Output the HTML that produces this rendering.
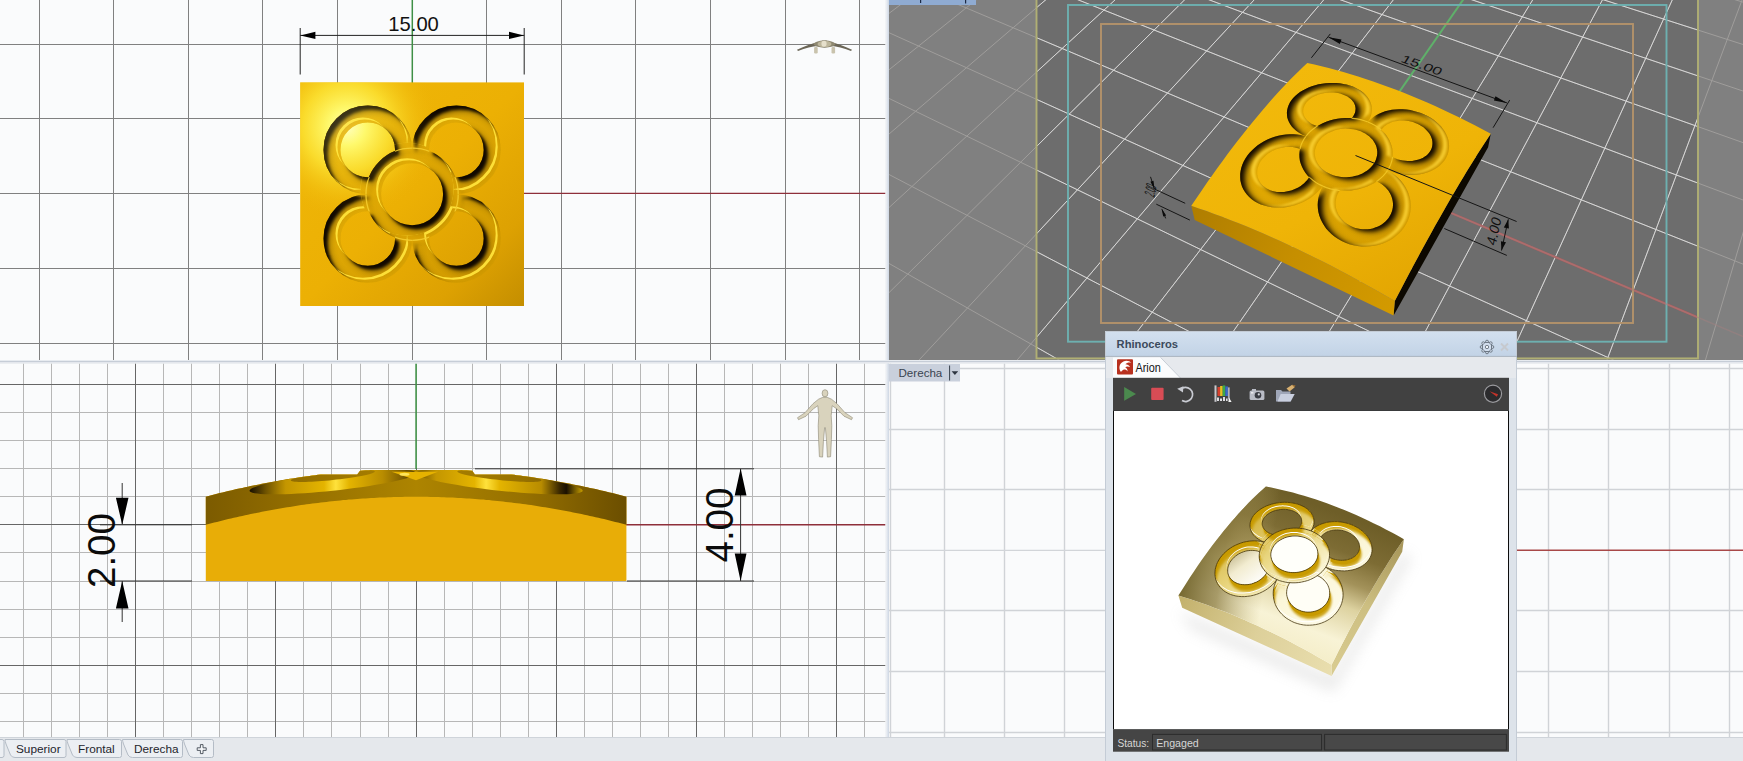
<!DOCTYPE html><html><head><meta charset="utf-8"><title>Rhinoceros</title>
<style>html,body{margin:0;padding:0;background:#e4e7eb;overflow:hidden}svg{display:block}text{font-family:"Liberation Sans",Arial,sans-serif}</style></head><body>
<svg width="1743" height="761" viewBox="0 0 1743 761">
<defs><clipPath id="c1"><rect x="0" y="0" width="885.5" height="360"/></clipPath>
<clipPath id="c2"><rect x="889" y="0" width="854" height="360"/></clipPath>
<clipPath id="c3"><rect x="0" y="363.5" width="885.5" height="373.5"/></clipPath>
<clipPath id="c4"><rect x="889" y="363.5" width="854" height="373.5"/></clipPath>
<radialGradient id="tvhl" gradientUnits="userSpaceOnUse" cx="347" cy="127" r="92"><stop offset="0" stop-color="#ffffc0"/><stop offset="0.2" stop-color="#fffb70" stop-opacity="0.97"/><stop offset="0.48" stop-color="#fde636" stop-opacity="0.78"/><stop offset="0.78" stop-color="#f5c816" stop-opacity="0.32"/><stop offset="1" stop-color="#eeb408" stop-opacity="0"/></radialGradient>
<linearGradient id="tvbase" gradientUnits="userSpaceOnUse" x1="300" y1="82" x2="524" y2="306"><stop offset="0" stop-color="#f0b808"/><stop offset="0.5" stop-color="#ecb004"/><stop offset="0.8" stop-color="#dda102"/><stop offset="1" stop-color="#c48e00"/></linearGradient>
<filter id="gv1" x="-5%" y="-5%" width="110%" height="110%" color-interpolation-filters="sRGB">
<feComponentTransfer in="SourceAlpha" result="inv"><feFuncA type="table" tableValues="1 0"/></feComponentTransfer>
<feGaussianBlur in="inv" stdDeviation="1.6" result="b1"/>
<feOffset in="b1" dx="3.7" dy="3.7" result="o1"/>
<feComposite in="o1" in2="SourceAlpha" operator="in" result="sh"/>
<feFlood flood-color="#100800" flood-opacity="1" result="dk"/>
<feComposite in="dk" in2="sh" operator="in" result="dark"/>
<feOffset in="inv" dx="-4.8100000000000005" dy="-4.8100000000000005" result="o2"/>
<feOffset in="inv" dx="-2.9600000000000004" dy="-2.9600000000000004" result="o3"/>
<feComposite in="o2" in2="o3" operator="out" result="band0"/>
<feGaussianBlur in="band0" stdDeviation="0.6" result="band1"/>
<feComposite in="band1" in2="SourceAlpha" operator="in" result="hl"/>
<feFlood flood-color="#ffe23a" flood-opacity="0.95" result="lt"/>
<feComposite in="lt" in2="hl" operator="in" result="light"/>
<feGaussianBlur in="inv" stdDeviation="3.04" result="b2"/>
<feOffset in="b2" dx="6.29" dy="6.29" result="o4"/>
<feComposite in="o4" in2="SourceAlpha" operator="in" result="sh2"/>
<feFlood flood-color="#100800" flood-opacity="0.4" result="dk2"/>
<feComposite in="dk2" in2="sh2" operator="in" result="dark2"/>
<feMerge><feMergeNode in="SourceGraphic"/><feMergeNode in="dark2"/><feMergeNode in="dark"/><feMergeNode in="light"/></feMerge></filter>
<mask id="m1u" maskUnits="userSpaceOnUse" x="280" y="60" width="270" height="270"><rect x="280" y="60" width="270" height="270" fill="#000"/><circle cx="367.8" cy="149.9" r="35.8" fill="none" stroke="#fff" stroke-width="17"/><circle cx="367.8" cy="238.5" r="35.8" fill="none" stroke="#fff" stroke-width="17"/><circle cx="456.4" cy="149.9" r="35.8" fill="none" stroke="#fff" stroke-width="17"/><circle cx="456.4" cy="238.5" r="35.8" fill="none" stroke="#fff" stroke-width="17"/><circle cx="412.1" cy="194.2" r="46.4" fill="#000"/><circle cx="412.1" cy="194.2" r="38.7" fill="none" stroke="#fff" stroke-width="15.4"/></mask>
<mask id="m1p" maskUnits="userSpaceOnUse" x="280" y="60" width="270" height="270"><rect x="280" y="60" width="270" height="270" fill="#000"/><circle cx="367.8" cy="149.9" r="35.8" fill="none" stroke="#fff" stroke-width="17"/><circle cx="367.8" cy="238.5" r="35.8" fill="none" stroke="#fff" stroke-width="17"/><circle cx="456.4" cy="149.9" r="35.8" fill="none" stroke="#fff" stroke-width="17"/><circle cx="456.4" cy="238.5" r="35.8" fill="none" stroke="#fff" stroke-width="17"/></mask>
<linearGradient id="tvgr" gradientUnits="userSpaceOnUse" x1="330" y1="110" x2="500" y2="280"><stop offset="0" stop-color="#e8b208"/><stop offset="1" stop-color="#cf9800"/></linearGradient>
<clipPath id="c2in"><rect x="1036.5" y="0" width="661.5" height="358.4"/></clipPath>
<linearGradient id="pvtop" gradientUnits="userSpaceOnUse" x1="1290" y1="70" x2="1400" y2="300"><stop offset="0" stop-color="#f2b90b"/><stop offset="0.55" stop-color="#efb407"/><stop offset="1" stop-color="#e3a602"/></linearGradient>
<linearGradient id="pvfl" gradientUnits="userSpaceOnUse" x1="1192" y1="215" x2="1394" y2="310"><stop offset="0" stop-color="#b07e00"/><stop offset="0.5" stop-color="#c68f00"/><stop offset="1" stop-color="#d39a00"/></linearGradient>
<mask id="m2u" maskUnits="userSpaceOnUse" x="1180" y="50" width="330" height="270"><rect x="1180" y="50" width="330" height="270" fill="#000"/><path d="M1323.9 184.5 L1325.7 181.4 L1327.2 178.3 L1328.4 175 L1329.2 171.8 L1329.7 168.6 L1329.8 165.4 L1329.6 162.3 L1329.1 159.2 L1328.2 156.2 L1327 153.4 L1325.5 150.6 L1323.7 148.1 L1321.6 145.7 L1319.3 143.5 L1316.7 141.5 L1313.9 139.8 L1310.9 138.2 L1307.6 136.9 L1304.3 135.9 L1300.8 135.1 L1297.2 134.6 L1293.5 134.3 L1289.7 134.3 L1286 134.5 L1282.2 135 L1278.4 135.8 L1274.7 136.8 L1271.1 138.1 L1267.5 139.5 L1264.1 141.3 L1260.8 143.2 L1257.7 145.3 L1254.8 147.7 L1252.1 150.2 L1249.6 152.8 L1247.4 155.6 L1245.4 158.5 L1243.7 161.5 L1242.4 164.6 L1241.3 167.7 L1240.6 170.9 L1240.2 174.1 L1240.2 177.3 L1240.4 180.4 L1241.1 183.5 L1242 186.4 L1243.3 189.3 L1245 192 L1246.9 194.6 L1249.2 197 L1251.7 199.2 L1254.5 201.2 L1257.6 202.9 L1260.8 204.4 L1264.3 205.6 L1268 206.5 L1271.8 207.2 L1275.7 207.6 L1279.7 207.6 L1283.7 207.4 L1287.7 206.9 L1291.8 206.1 L1295.7 204.9 L1299.6 203.6 L1303.4 201.9 L1307 200 L1310.4 197.9 L1313.6 195.6 L1316.6 193 L1319.3 190.3 L1321.7 187.5ZM1308.7 178.1 L1309.8 176.2 L1310.8 174.3 L1311.5 172.3 L1312.1 170.3 L1312.4 168.3 L1312.5 166.4 L1312.4 164.4 L1312.1 162.5 L1311.6 160.7 L1310.9 158.9 L1310 157.2 L1308.9 155.6 L1307.6 154.1 L1306.2 152.8 L1304.6 151.5 L1302.9 150.4 L1301 149.4 L1299 148.6 L1296.9 148 L1294.7 147.5 L1292.5 147.1 L1290.2 146.9 L1287.9 146.9 L1285.5 147.1 L1283.1 147.4 L1280.8 147.9 L1278.5 148.5 L1276.2 149.3 L1274 150.2 L1271.8 151.3 L1269.8 152.5 L1267.9 153.8 L1266.1 155.3 L1264.4 156.9 L1262.9 158.5 L1261.5 160.3 L1260.3 162.1 L1259.3 164 L1258.5 165.9 L1257.9 167.8 L1257.4 169.8 L1257.2 171.7 L1257.2 173.7 L1257.4 175.6 L1257.8 177.5 L1258.5 179.3 L1259.3 181.1 L1260.3 182.7 L1261.5 184.3 L1262.9 185.7 L1264.5 187.1 L1266.2 188.2 L1268.1 189.3 L1270.1 190.2 L1272.3 190.9 L1274.5 191.5 L1276.8 191.9 L1279.2 192.1 L1281.6 192.1 L1284.1 192 L1286.6 191.6 L1289 191.1 L1291.4 190.5 L1293.8 189.6 L1296.1 188.6 L1298.3 187.5 L1300.4 186.2 L1302.3 184.8 L1304.2 183.3 L1305.8 181.6 L1307.3 179.9Z" fill="#fff" fill-rule="evenodd"/><path d="M1367 123.2 L1368.6 120.8 L1369.9 118.4 L1370.9 115.9 L1371.5 113.4 L1371.9 110.9 L1371.9 108.4 L1371.6 106 L1370.9 103.6 L1370 101.2 L1368.8 99 L1367.2 96.8 L1365.4 94.7 L1363.4 92.8 L1361.1 91 L1358.5 89.4 L1355.8 87.9 L1352.9 86.6 L1349.8 85.5 L1346.6 84.6 L1343.3 83.9 L1339.8 83.3 L1336.3 83 L1332.8 82.9 L1329.2 82.9 L1325.6 83.2 L1322.1 83.7 L1318.6 84.3 L1315.2 85.2 L1311.8 86.2 L1308.6 87.5 L1305.6 88.9 L1302.7 90.4 L1300 92.1 L1297.5 94 L1295.2 96 L1293.2 98.1 L1291.4 100.3 L1289.9 102.6 L1288.7 105 L1287.8 107.4 L1287.2 109.9 L1286.9 112.4 L1287 114.9 L1287.3 117.4 L1288 119.8 L1289.1 122.2 L1290.4 124.5 L1292 126.7 L1294 128.8 L1296.2 130.7 L1298.7 132.5 L1301.5 134.2 L1304.5 135.7 L1307.6 136.9 L1311 138 L1314.6 138.9 L1318.2 139.5 L1322 139.9 L1325.8 140.1 L1329.6 140 L1333.4 139.7 L1337.3 139.2 L1341 138.4 L1344.6 137.5 L1348.2 136.3 L1351.5 134.9 L1354.7 133.3 L1357.6 131.6 L1360.4 129.7 L1362.9 127.6 L1365.1 125.5ZM1352.4 117.5 L1353.4 116.1 L1354.2 114.6 L1354.9 113.1 L1355.3 111.6 L1355.5 110 L1355.6 108.5 L1355.4 107 L1355.1 105.5 L1354.5 104 L1353.8 102.6 L1352.8 101.3 L1351.8 100 L1350.5 98.8 L1349.1 97.7 L1347.5 96.6 L1345.8 95.7 L1344 94.9 L1342.1 94.2 L1340.1 93.6 L1338 93.1 L1335.9 92.8 L1333.7 92.6 L1331.5 92.5 L1329.3 92.5 L1327 92.7 L1324.8 93 L1322.6 93.4 L1320.5 94 L1318.4 94.6 L1316.4 95.4 L1314.5 96.3 L1312.7 97.3 L1311.1 98.3 L1309.5 99.5 L1308.1 100.8 L1306.9 102.1 L1305.8 103.5 L1304.9 104.9 L1304.2 106.4 L1303.7 107.9 L1303.3 109.4 L1303.2 110.9 L1303.2 112.5 L1303.5 114 L1304 115.5 L1304.6 116.9 L1305.5 118.3 L1306.5 119.7 L1307.7 120.9 L1309.1 122.1 L1310.6 123.2 L1312.3 124.2 L1314.2 125.1 L1316.1 125.8 L1318.2 126.5 L1320.3 127 L1322.6 127.4 L1324.9 127.6 L1327.2 127.7 L1329.5 127.7 L1331.8 127.5 L1334.2 127.2 L1336.4 126.7 L1338.7 126.1 L1340.8 125.4 L1342.8 124.6 L1344.8 123.7 L1346.6 122.6 L1348.3 121.5 L1349.8 120.2 L1351.2 118.9Z" fill="#fff" fill-rule="evenodd"/><path d="M1405.9 224.6 L1407.6 221.3 L1408.9 217.9 L1409.9 214.4 L1410.5 210.9 L1410.8 207.3 L1410.7 203.7 L1410.3 200.2 L1409.5 196.7 L1408.4 193.3 L1407 189.9 L1405.2 186.7 L1403.2 183.7 L1400.9 180.8 L1398.3 178.1 L1395.4 175.6 L1392.4 173.3 L1389.1 171.2 L1385.7 169.5 L1382.1 167.9 L1378.4 166.7 L1374.6 165.7 L1370.8 165 L1366.8 164.6 L1362.9 164.5 L1359 164.7 L1355.1 165.1 L1351.3 165.9 L1347.5 167 L1343.9 168.3 L1340.4 169.9 L1337.1 171.8 L1334 173.9 L1331.1 176.2 L1328.4 178.8 L1326 181.5 L1323.9 184.5 L1322 187.6 L1320.5 190.9 L1319.3 194.2 L1318.4 197.7 L1317.9 201.2 L1317.7 204.8 L1317.9 208.4 L1318.4 212 L1319.3 215.5 L1320.6 219 L1322.2 222.3 L1324.1 225.6 L1326.3 228.7 L1328.9 231.6 L1331.7 234.3 L1334.8 236.8 L1338.2 239.1 L1341.7 241.1 L1345.5 242.8 L1349.4 244.2 L1353.4 245.2 L1357.5 246 L1361.7 246.5 L1365.8 246.6 L1370 246.3 L1374.1 245.8 L1378.2 244.9 L1382.1 243.7 L1385.9 242.2 L1389.5 240.4 L1392.9 238.4 L1396 236 L1398.9 233.5 L1401.6 230.7 L1403.9 227.7ZM1389.8 216 L1390.9 214 L1391.7 212 L1392.4 209.8 L1392.8 207.7 L1393 205.5 L1393 203.3 L1392.7 201.1 L1392.3 198.9 L1391.6 196.8 L1390.8 194.7 L1389.7 192.7 L1388.5 190.8 L1387 189 L1385.4 187.3 L1383.7 185.7 L1381.8 184.3 L1379.8 183 L1377.7 181.9 L1375.4 180.9 L1373.1 180.1 L1370.8 179.5 L1368.4 179.1 L1365.9 178.8 L1363.5 178.8 L1361 178.9 L1358.6 179.2 L1356.2 179.7 L1353.9 180.3 L1351.6 181.2 L1349.5 182.2 L1347.4 183.4 L1345.5 184.7 L1343.7 186.1 L1342 187.8 L1340.6 189.5 L1339.3 191.3 L1338.1 193.3 L1337.2 195.3 L1336.5 197.4 L1336 199.5 L1335.7 201.7 L1335.6 203.9 L1335.8 206.1 L1336.1 208.3 L1336.7 210.5 L1337.5 212.6 L1338.5 214.7 L1339.7 216.6 L1341.1 218.5 L1342.7 220.3 L1344.4 221.9 L1346.3 223.5 L1348.4 224.8 L1350.6 226 L1352.8 227 L1355.2 227.9 L1357.7 228.5 L1360.2 229 L1362.7 229.3 L1365.3 229.3 L1367.8 229.2 L1370.3 228.9 L1372.8 228.4 L1375.2 227.6 L1377.5 226.7 L1379.7 225.7 L1381.8 224.4 L1383.7 223 L1385.5 221.4 L1387.1 219.8 L1388.6 217.9Z" fill="#fff" fill-rule="evenodd"/><path d="M1445.2 159.4 L1446.7 156.8 L1447.8 154.2 L1448.5 151.5 L1449 148.7 L1449.1 145.8 L1448.9 143 L1448.4 140.1 L1447.5 137.3 L1446.3 134.5 L1444.9 131.8 L1443.1 129.2 L1441.1 126.6 L1438.8 124.2 L1436.3 121.9 L1433.6 119.8 L1430.6 117.8 L1427.5 116 L1424.3 114.5 L1420.9 113.1 L1417.4 111.9 L1413.8 110.9 L1410.2 110.1 L1406.5 109.6 L1402.8 109.3 L1399.2 109.3 L1395.5 109.4 L1392 109.8 L1388.5 110.5 L1385.2 111.3 L1382 112.4 L1379 113.7 L1376.1 115.3 L1373.5 117 L1371 118.9 L1368.9 121 L1367 123.2 L1365.3 125.6 L1364 128.1 L1363 130.7 L1362.3 133.5 L1361.9 136.3 L1361.9 139.1 L1362.2 142 L1362.8 144.9 L1363.7 147.8 L1365 150.6 L1366.6 153.4 L1368.6 156.1 L1370.8 158.7 L1373.3 161.2 L1376.1 163.5 L1379.1 165.7 L1382.3 167.7 L1385.7 169.5 L1389.3 171 L1393 172.3 L1396.8 173.4 L1400.7 174.2 L1404.7 174.8 L1408.6 175.1 L1412.5 175.1 L1416.4 174.8 L1420.1 174.3 L1423.8 173.6 L1427.2 172.5 L1430.5 171.3 L1433.6 169.8 L1436.5 168.1 L1439.1 166.2 L1441.4 164.1 L1443.5 161.8ZM1430 151.6 L1430.9 150 L1431.6 148.4 L1432.1 146.8 L1432.4 145 L1432.5 143.3 L1432.4 141.5 L1432.1 139.8 L1431.6 138 L1430.9 136.3 L1430 134.6 L1429 133 L1427.7 131.4 L1426.3 129.9 L1424.8 128.4 L1423.1 127.1 L1421.3 125.9 L1419.3 124.8 L1417.3 123.8 L1415.2 122.9 L1413 122.1 L1410.8 121.5 L1408.5 121 L1406.2 120.7 L1403.9 120.5 L1401.6 120.5 L1399.4 120.6 L1397.2 120.9 L1395 121.3 L1392.9 121.8 L1391 122.5 L1389.1 123.4 L1387.3 124.3 L1385.7 125.4 L1384.2 126.6 L1382.9 127.9 L1381.7 129.3 L1380.7 130.8 L1379.9 132.3 L1379.3 134 L1378.9 135.7 L1378.7 137.4 L1378.7 139.2 L1379 140.9 L1379.4 142.7 L1380 144.5 L1380.8 146.2 L1381.8 147.9 L1383 149.6 L1384.4 151.1 L1385.9 152.6 L1387.6 154.1 L1389.5 155.4 L1391.5 156.6 L1393.5 157.6 L1395.7 158.6 L1398 159.4 L1400.3 160 L1402.7 160.5 L1405.1 160.8 L1407.5 161 L1409.9 161 L1412.2 160.9 L1414.5 160.6 L1416.7 160.1 L1418.9 159.5 L1420.9 158.8 L1422.8 157.9 L1424.5 156.8 L1426.2 155.7 L1427.6 154.4 L1428.9 153.1Z" fill="#fff" fill-rule="evenodd"/><path d="M1387.6 170.4 L1389.3 167.4 L1390.7 164.4 L1391.7 161.3 L1392.4 158.1 L1392.7 154.9 L1392.7 151.8 L1392.3 148.6 L1391.5 145.5 L1390.4 142.5 L1389 139.6 L1387.3 136.8 L1385.3 134.1 L1383 131.6 L1380.4 129.3 L1377.6 127.1 L1374.6 125.2 L1371.3 123.5 L1367.9 122 L1364.4 120.7 L1360.7 119.6 L1356.9 118.8 L1353 118.3 L1349.1 118 L1345.2 118 L1341.3 118.2 L1337.4 118.7 L1333.5 119.5 L1329.8 120.5 L1326.2 121.7 L1322.7 123.2 L1319.3 124.9 L1316.2 126.8 L1313.2 128.9 L1310.5 131.2 L1308.1 133.7 L1305.9 136.3 L1304 139.1 L1302.4 142 L1301.1 145 L1300.2 148 L1299.6 151.2 L1299.4 154.3 L1299.5 157.5 L1299.9 160.7 L1300.8 163.8 L1302 166.8 L1303.5 169.8 L1305.4 172.7 L1307.5 175.4 L1310.1 177.9 L1312.9 180.3 L1315.9 182.5 L1319.2 184.4 L1322.8 186.1 L1326.5 187.6 L1330.4 188.8 L1334.5 189.7 L1338.6 190.3 L1342.8 190.6 L1347 190.6 L1351.2 190.4 L1355.4 189.8 L1359.5 189 L1363.4 187.8 L1367.3 186.4 L1370.9 184.8 L1374.4 182.9 L1377.6 180.7 L1380.5 178.4 L1383.2 175.9 L1385.6 173.2Z" fill="#000"/><path d="M1387.6 170.4 L1389.3 167.4 L1390.7 164.4 L1391.7 161.3 L1392.4 158.1 L1392.7 154.9 L1392.7 151.8 L1392.3 148.6 L1391.5 145.5 L1390.4 142.5 L1389 139.6 L1387.3 136.8 L1385.3 134.1 L1383 131.6 L1380.4 129.3 L1377.6 127.1 L1374.6 125.2 L1371.3 123.5 L1367.9 122 L1364.4 120.7 L1360.7 119.6 L1356.9 118.8 L1353 118.3 L1349.1 118 L1345.2 118 L1341.3 118.2 L1337.4 118.7 L1333.5 119.5 L1329.8 120.5 L1326.2 121.7 L1322.7 123.2 L1319.3 124.9 L1316.2 126.8 L1313.2 128.9 L1310.5 131.2 L1308.1 133.7 L1305.9 136.3 L1304 139.1 L1302.4 142 L1301.1 145 L1300.2 148 L1299.6 151.2 L1299.4 154.3 L1299.5 157.5 L1299.9 160.7 L1300.8 163.8 L1302 166.8 L1303.5 169.8 L1305.4 172.7 L1307.5 175.4 L1310.1 177.9 L1312.9 180.3 L1315.9 182.5 L1319.2 184.4 L1322.8 186.1 L1326.5 187.6 L1330.4 188.8 L1334.5 189.7 L1338.6 190.3 L1342.8 190.6 L1347 190.6 L1351.2 190.4 L1355.4 189.8 L1359.5 189 L1363.4 187.8 L1367.3 186.4 L1370.9 184.8 L1374.4 182.9 L1377.6 180.7 L1380.5 178.4 L1383.2 175.9 L1385.6 173.2ZM1373.7 163.9 L1374.9 161.9 L1375.8 159.9 L1376.5 157.8 L1377 155.7 L1377.3 153.6 L1377.3 151.5 L1377 149.4 L1376.6 147.3 L1375.9 145.3 L1374.9 143.3 L1373.8 141.4 L1372.5 139.6 L1370.9 137.9 L1369.2 136.3 L1367.3 134.9 L1365.3 133.6 L1363.1 132.4 L1360.8 131.3 L1358.4 130.5 L1355.9 129.8 L1353.4 129.2 L1350.8 128.9 L1348.1 128.7 L1345.5 128.6 L1342.8 128.8 L1340.2 129.1 L1337.6 129.6 L1335 130.3 L1332.6 131.2 L1330.2 132.2 L1328 133.3 L1325.9 134.6 L1323.9 136.1 L1322.1 137.6 L1320.5 139.3 L1319 141.1 L1317.8 143 L1316.7 144.9 L1315.9 146.9 L1315.3 149 L1314.9 151.1 L1314.8 153.2 L1314.9 155.3 L1315.3 157.4 L1315.8 159.5 L1316.7 161.5 L1317.7 163.5 L1319 165.4 L1320.5 167.2 L1322.1 168.9 L1324 170.4 L1326.1 171.9 L1328.3 173.1 L1330.6 174.3 L1333.1 175.2 L1335.7 176 L1338.4 176.6 L1341.1 177 L1343.9 177.2 L1346.7 177.2 L1349.5 177 L1352.2 176.7 L1354.9 176.1 L1357.6 175.4 L1360.1 174.4 L1362.5 173.4 L1364.8 172.1 L1367 170.7 L1368.9 169.2 L1370.7 167.5 L1372.3 165.7Z" fill="#fff" fill-rule="evenodd"/></mask>
<mask id="m2p" maskUnits="userSpaceOnUse" x="1180" y="50" width="330" height="270"><rect x="1180" y="50" width="330" height="270" fill="#000"/><path d="M1323.9 184.5 L1325.7 181.4 L1327.2 178.3 L1328.4 175 L1329.2 171.8 L1329.7 168.6 L1329.8 165.4 L1329.6 162.3 L1329.1 159.2 L1328.2 156.2 L1327 153.4 L1325.5 150.6 L1323.7 148.1 L1321.6 145.7 L1319.3 143.5 L1316.7 141.5 L1313.9 139.8 L1310.9 138.2 L1307.6 136.9 L1304.3 135.9 L1300.8 135.1 L1297.2 134.6 L1293.5 134.3 L1289.7 134.3 L1286 134.5 L1282.2 135 L1278.4 135.8 L1274.7 136.8 L1271.1 138.1 L1267.5 139.5 L1264.1 141.3 L1260.8 143.2 L1257.7 145.3 L1254.8 147.7 L1252.1 150.2 L1249.6 152.8 L1247.4 155.6 L1245.4 158.5 L1243.7 161.5 L1242.4 164.6 L1241.3 167.7 L1240.6 170.9 L1240.2 174.1 L1240.2 177.3 L1240.4 180.4 L1241.1 183.5 L1242 186.4 L1243.3 189.3 L1245 192 L1246.9 194.6 L1249.2 197 L1251.7 199.2 L1254.5 201.2 L1257.6 202.9 L1260.8 204.4 L1264.3 205.6 L1268 206.5 L1271.8 207.2 L1275.7 207.6 L1279.7 207.6 L1283.7 207.4 L1287.7 206.9 L1291.8 206.1 L1295.7 204.9 L1299.6 203.6 L1303.4 201.9 L1307 200 L1310.4 197.9 L1313.6 195.6 L1316.6 193 L1319.3 190.3 L1321.7 187.5ZM1308.7 178.1 L1309.8 176.2 L1310.8 174.3 L1311.5 172.3 L1312.1 170.3 L1312.4 168.3 L1312.5 166.4 L1312.4 164.4 L1312.1 162.5 L1311.6 160.7 L1310.9 158.9 L1310 157.2 L1308.9 155.6 L1307.6 154.1 L1306.2 152.8 L1304.6 151.5 L1302.9 150.4 L1301 149.4 L1299 148.6 L1296.9 148 L1294.7 147.5 L1292.5 147.1 L1290.2 146.9 L1287.9 146.9 L1285.5 147.1 L1283.1 147.4 L1280.8 147.9 L1278.5 148.5 L1276.2 149.3 L1274 150.2 L1271.8 151.3 L1269.8 152.5 L1267.9 153.8 L1266.1 155.3 L1264.4 156.9 L1262.9 158.5 L1261.5 160.3 L1260.3 162.1 L1259.3 164 L1258.5 165.9 L1257.9 167.8 L1257.4 169.8 L1257.2 171.7 L1257.2 173.7 L1257.4 175.6 L1257.8 177.5 L1258.5 179.3 L1259.3 181.1 L1260.3 182.7 L1261.5 184.3 L1262.9 185.7 L1264.5 187.1 L1266.2 188.2 L1268.1 189.3 L1270.1 190.2 L1272.3 190.9 L1274.5 191.5 L1276.8 191.9 L1279.2 192.1 L1281.6 192.1 L1284.1 192 L1286.6 191.6 L1289 191.1 L1291.4 190.5 L1293.8 189.6 L1296.1 188.6 L1298.3 187.5 L1300.4 186.2 L1302.3 184.8 L1304.2 183.3 L1305.8 181.6 L1307.3 179.9Z" fill="#fff" fill-rule="evenodd"/><path d="M1367 123.2 L1368.6 120.8 L1369.9 118.4 L1370.9 115.9 L1371.5 113.4 L1371.9 110.9 L1371.9 108.4 L1371.6 106 L1370.9 103.6 L1370 101.2 L1368.8 99 L1367.2 96.8 L1365.4 94.7 L1363.4 92.8 L1361.1 91 L1358.5 89.4 L1355.8 87.9 L1352.9 86.6 L1349.8 85.5 L1346.6 84.6 L1343.3 83.9 L1339.8 83.3 L1336.3 83 L1332.8 82.9 L1329.2 82.9 L1325.6 83.2 L1322.1 83.7 L1318.6 84.3 L1315.2 85.2 L1311.8 86.2 L1308.6 87.5 L1305.6 88.9 L1302.7 90.4 L1300 92.1 L1297.5 94 L1295.2 96 L1293.2 98.1 L1291.4 100.3 L1289.9 102.6 L1288.7 105 L1287.8 107.4 L1287.2 109.9 L1286.9 112.4 L1287 114.9 L1287.3 117.4 L1288 119.8 L1289.1 122.2 L1290.4 124.5 L1292 126.7 L1294 128.8 L1296.2 130.7 L1298.7 132.5 L1301.5 134.2 L1304.5 135.7 L1307.6 136.9 L1311 138 L1314.6 138.9 L1318.2 139.5 L1322 139.9 L1325.8 140.1 L1329.6 140 L1333.4 139.7 L1337.3 139.2 L1341 138.4 L1344.6 137.5 L1348.2 136.3 L1351.5 134.9 L1354.7 133.3 L1357.6 131.6 L1360.4 129.7 L1362.9 127.6 L1365.1 125.5ZM1352.4 117.5 L1353.4 116.1 L1354.2 114.6 L1354.9 113.1 L1355.3 111.6 L1355.5 110 L1355.6 108.5 L1355.4 107 L1355.1 105.5 L1354.5 104 L1353.8 102.6 L1352.8 101.3 L1351.8 100 L1350.5 98.8 L1349.1 97.7 L1347.5 96.6 L1345.8 95.7 L1344 94.9 L1342.1 94.2 L1340.1 93.6 L1338 93.1 L1335.9 92.8 L1333.7 92.6 L1331.5 92.5 L1329.3 92.5 L1327 92.7 L1324.8 93 L1322.6 93.4 L1320.5 94 L1318.4 94.6 L1316.4 95.4 L1314.5 96.3 L1312.7 97.3 L1311.1 98.3 L1309.5 99.5 L1308.1 100.8 L1306.9 102.1 L1305.8 103.5 L1304.9 104.9 L1304.2 106.4 L1303.7 107.9 L1303.3 109.4 L1303.2 110.9 L1303.2 112.5 L1303.5 114 L1304 115.5 L1304.6 116.9 L1305.5 118.3 L1306.5 119.7 L1307.7 120.9 L1309.1 122.1 L1310.6 123.2 L1312.3 124.2 L1314.2 125.1 L1316.1 125.8 L1318.2 126.5 L1320.3 127 L1322.6 127.4 L1324.9 127.6 L1327.2 127.7 L1329.5 127.7 L1331.8 127.5 L1334.2 127.2 L1336.4 126.7 L1338.7 126.1 L1340.8 125.4 L1342.8 124.6 L1344.8 123.7 L1346.6 122.6 L1348.3 121.5 L1349.8 120.2 L1351.2 118.9Z" fill="#fff" fill-rule="evenodd"/><path d="M1405.9 224.6 L1407.6 221.3 L1408.9 217.9 L1409.9 214.4 L1410.5 210.9 L1410.8 207.3 L1410.7 203.7 L1410.3 200.2 L1409.5 196.7 L1408.4 193.3 L1407 189.9 L1405.2 186.7 L1403.2 183.7 L1400.9 180.8 L1398.3 178.1 L1395.4 175.6 L1392.4 173.3 L1389.1 171.2 L1385.7 169.5 L1382.1 167.9 L1378.4 166.7 L1374.6 165.7 L1370.8 165 L1366.8 164.6 L1362.9 164.5 L1359 164.7 L1355.1 165.1 L1351.3 165.9 L1347.5 167 L1343.9 168.3 L1340.4 169.9 L1337.1 171.8 L1334 173.9 L1331.1 176.2 L1328.4 178.8 L1326 181.5 L1323.9 184.5 L1322 187.6 L1320.5 190.9 L1319.3 194.2 L1318.4 197.7 L1317.9 201.2 L1317.7 204.8 L1317.9 208.4 L1318.4 212 L1319.3 215.5 L1320.6 219 L1322.2 222.3 L1324.1 225.6 L1326.3 228.7 L1328.9 231.6 L1331.7 234.3 L1334.8 236.8 L1338.2 239.1 L1341.7 241.1 L1345.5 242.8 L1349.4 244.2 L1353.4 245.2 L1357.5 246 L1361.7 246.5 L1365.8 246.6 L1370 246.3 L1374.1 245.8 L1378.2 244.9 L1382.1 243.7 L1385.9 242.2 L1389.5 240.4 L1392.9 238.4 L1396 236 L1398.9 233.5 L1401.6 230.7 L1403.9 227.7ZM1389.8 216 L1390.9 214 L1391.7 212 L1392.4 209.8 L1392.8 207.7 L1393 205.5 L1393 203.3 L1392.7 201.1 L1392.3 198.9 L1391.6 196.8 L1390.8 194.7 L1389.7 192.7 L1388.5 190.8 L1387 189 L1385.4 187.3 L1383.7 185.7 L1381.8 184.3 L1379.8 183 L1377.7 181.9 L1375.4 180.9 L1373.1 180.1 L1370.8 179.5 L1368.4 179.1 L1365.9 178.8 L1363.5 178.8 L1361 178.9 L1358.6 179.2 L1356.2 179.7 L1353.9 180.3 L1351.6 181.2 L1349.5 182.2 L1347.4 183.4 L1345.5 184.7 L1343.7 186.1 L1342 187.8 L1340.6 189.5 L1339.3 191.3 L1338.1 193.3 L1337.2 195.3 L1336.5 197.4 L1336 199.5 L1335.7 201.7 L1335.6 203.9 L1335.8 206.1 L1336.1 208.3 L1336.7 210.5 L1337.5 212.6 L1338.5 214.7 L1339.7 216.6 L1341.1 218.5 L1342.7 220.3 L1344.4 221.9 L1346.3 223.5 L1348.4 224.8 L1350.6 226 L1352.8 227 L1355.2 227.9 L1357.7 228.5 L1360.2 229 L1362.7 229.3 L1365.3 229.3 L1367.8 229.2 L1370.3 228.9 L1372.8 228.4 L1375.2 227.6 L1377.5 226.7 L1379.7 225.7 L1381.8 224.4 L1383.7 223 L1385.5 221.4 L1387.1 219.8 L1388.6 217.9Z" fill="#fff" fill-rule="evenodd"/><path d="M1445.2 159.4 L1446.7 156.8 L1447.8 154.2 L1448.5 151.5 L1449 148.7 L1449.1 145.8 L1448.9 143 L1448.4 140.1 L1447.5 137.3 L1446.3 134.5 L1444.9 131.8 L1443.1 129.2 L1441.1 126.6 L1438.8 124.2 L1436.3 121.9 L1433.6 119.8 L1430.6 117.8 L1427.5 116 L1424.3 114.5 L1420.9 113.1 L1417.4 111.9 L1413.8 110.9 L1410.2 110.1 L1406.5 109.6 L1402.8 109.3 L1399.2 109.3 L1395.5 109.4 L1392 109.8 L1388.5 110.5 L1385.2 111.3 L1382 112.4 L1379 113.7 L1376.1 115.3 L1373.5 117 L1371 118.9 L1368.9 121 L1367 123.2 L1365.3 125.6 L1364 128.1 L1363 130.7 L1362.3 133.5 L1361.9 136.3 L1361.9 139.1 L1362.2 142 L1362.8 144.9 L1363.7 147.8 L1365 150.6 L1366.6 153.4 L1368.6 156.1 L1370.8 158.7 L1373.3 161.2 L1376.1 163.5 L1379.1 165.7 L1382.3 167.7 L1385.7 169.5 L1389.3 171 L1393 172.3 L1396.8 173.4 L1400.7 174.2 L1404.7 174.8 L1408.6 175.1 L1412.5 175.1 L1416.4 174.8 L1420.1 174.3 L1423.8 173.6 L1427.2 172.5 L1430.5 171.3 L1433.6 169.8 L1436.5 168.1 L1439.1 166.2 L1441.4 164.1 L1443.5 161.8ZM1430 151.6 L1430.9 150 L1431.6 148.4 L1432.1 146.8 L1432.4 145 L1432.5 143.3 L1432.4 141.5 L1432.1 139.8 L1431.6 138 L1430.9 136.3 L1430 134.6 L1429 133 L1427.7 131.4 L1426.3 129.9 L1424.8 128.4 L1423.1 127.1 L1421.3 125.9 L1419.3 124.8 L1417.3 123.8 L1415.2 122.9 L1413 122.1 L1410.8 121.5 L1408.5 121 L1406.2 120.7 L1403.9 120.5 L1401.6 120.5 L1399.4 120.6 L1397.2 120.9 L1395 121.3 L1392.9 121.8 L1391 122.5 L1389.1 123.4 L1387.3 124.3 L1385.7 125.4 L1384.2 126.6 L1382.9 127.9 L1381.7 129.3 L1380.7 130.8 L1379.9 132.3 L1379.3 134 L1378.9 135.7 L1378.7 137.4 L1378.7 139.2 L1379 140.9 L1379.4 142.7 L1380 144.5 L1380.8 146.2 L1381.8 147.9 L1383 149.6 L1384.4 151.1 L1385.9 152.6 L1387.6 154.1 L1389.5 155.4 L1391.5 156.6 L1393.5 157.6 L1395.7 158.6 L1398 159.4 L1400.3 160 L1402.7 160.5 L1405.1 160.8 L1407.5 161 L1409.9 161 L1412.2 160.9 L1414.5 160.6 L1416.7 160.1 L1418.9 159.5 L1420.9 158.8 L1422.8 157.9 L1424.5 156.8 L1426.2 155.7 L1427.6 154.4 L1428.9 153.1Z" fill="#fff" fill-rule="evenodd"/></mask>
<filter id="gv2" x="-5%" y="-5%" width="110%" height="110%" color-interpolation-filters="sRGB">
<feComponentTransfer in="SourceAlpha" result="inv"><feFuncA type="table" tableValues="1 0"/></feComponentTransfer>
<feGaussianBlur in="inv" stdDeviation="1.9" result="b1"/>
<feOffset in="b1" dx="4.2" dy="1.6" result="o1"/>
<feComposite in="o1" in2="SourceAlpha" operator="in" result="sh"/>
<feFlood flood-color="#140a00" flood-opacity="1" result="dk"/>
<feComposite in="dk" in2="sh" operator="in" result="dark"/>
<feOffset in="inv" dx="-6.300000000000001" dy="-2.4000000000000004" result="o2"/>
<feOffset in="inv" dx="-1.6800000000000002" dy="-0.6400000000000001" result="o3"/>
<feComposite in="o2" in2="o3" operator="out" result="band0"/>
<feGaussianBlur in="band0" stdDeviation="1.3" result="band1"/>
<feComposite in="band1" in2="SourceAlpha" operator="in" result="hl"/>
<feFlood flood-color="#ffd83a" flood-opacity="0.75" result="lt"/>
<feComposite in="lt" in2="hl" operator="in" result="light"/>
<feGaussianBlur in="inv" stdDeviation="3.61" result="b2"/>
<feOffset in="b2" dx="7.14" dy="2.72" result="o4"/>
<feComposite in="o4" in2="SourceAlpha" operator="in" result="sh2"/>
<feFlood flood-color="#140a00" flood-opacity="0.4" result="dk2"/>
<feComposite in="dk2" in2="sh2" operator="in" result="dark2"/>
<feMerge><feMergeNode in="SourceGraphic"/><feMergeNode in="dark2"/><feMergeNode in="dark"/><feMergeNode in="light"/></feMerge></filter>
<linearGradient id="pvgr" gradientUnits="userSpaceOnUse" x1="1230" y1="120" x2="1460" y2="220"><stop offset="0" stop-color="#e4ac04"/><stop offset="1" stop-color="#d29b00"/></linearGradient>
<linearGradient id="fvband" gradientUnits="userSpaceOnUse" x1="206" y1="0" x2="627" y2="0"><stop offset="0" stop-color="#7c5b00"/><stop offset="0.25" stop-color="#977100"/><stop offset="0.5" stop-color="#ad8400"/><stop offset="0.75" stop-color="#977100"/><stop offset="1" stop-color="#6b4e00"/></linearGradient>
<linearGradient id="fvpl" gradientUnits="userSpaceOnUse" x1="249" y1="0" x2="416" y2="0"><stop offset="0" stop-color="#140c00"/><stop offset="0.1" stop-color="#6e5200"/><stop offset="0.22" stop-color="#c49600"/><stop offset="0.45" stop-color="#e4b400"/><stop offset="0.52" stop-color="#ffe23c"/><stop offset="0.6" stop-color="#e4b400"/><stop offset="0.8" stop-color="#b88c00"/><stop offset="0.93" stop-color="#7a5a00"/><stop offset="1" stop-color="#2a1c00"/></linearGradient>
<linearGradient id="fvpr" gradientUnits="userSpaceOnUse" x1="416" y1="0" x2="583" y2="0"><stop offset="0" stop-color="#6e5200"/><stop offset="0.12" stop-color="#c49600"/><stop offset="0.35" stop-color="#e4b400"/><stop offset="0.42" stop-color="#ffe23c"/><stop offset="0.5" stop-color="#e4b400"/><stop offset="0.75" stop-color="#b88c00"/><stop offset="0.86" stop-color="#3a2800"/><stop offset="0.9" stop-color="#1a1000"/><stop offset="1" stop-color="#caa000"/></linearGradient>
<clipPath id="c3band"><path d="M205.8 496.8 L208.6 496 L211.4 495.3 L214.2 494.6 L217 493.8 L219.8 493.1 L222.6 492.5 L225.4 491.8 L228.2 491.1 L231 490.4 L233.8 489.8 L236.6 489.1 L239.4 488.5 L242.3 487.9 L245.1 487.3 L247.9 486.7 L250.7 486.1 L253.5 485.5 L256.3 484.9 L259.1 484.4 L261.9 483.8 L264.7 483.3 L267.5 482.7 L270.3 482.2 L273.1 481.7 L275.9 481.2 L278.7 480.7 L281.5 480.2 L284.3 479.7 L287.1 479.3 L289.9 478.8 L292.7 478.4 L295.5 477.9 L298.3 477.5 L301.1 477.1 L303.9 476.7 L306.7 476.3 L309.5 475.9 L312.4 475.5 L315.2 475.2 L318 474.8 L320.8 474.6 L323.6 474.6 L326.4 474.6 L329.2 474.6 L332 474.6 L334.8 474.6 L337.6 474.6 L340.4 474.6 L343.2 474.6 L346 474.6 L348.8 474.6 L351.6 474.6 L354.4 474.6 L357.2 474.6 L360 470.7 L362.8 470.5 L365.6 470.3 L368.4 470.2 L371.2 470 L374 470 L376.8 470 L379.6 470 L382.5 470 L385.3 470 L388.1 470 L390.9 470 L393.7 470 L396.5 470 L399.3 470 L402.1 470 L404.9 470 L407.7 470 L410.5 470 L413.3 470 L416.1 470 L418.9 470 L421.7 470 L424.5 470 L427.3 470 L430.1 470 L432.9 470 L435.7 470 L438.5 470 L441.3 470 L444.1 470 L446.9 470 L449.7 470 L452.6 470 L455.4 470 L458.2 470 L461 470 L463.8 470.2 L466.6 470.3 L469.4 470.5 L472.2 470.7 L475 474.6 L477.8 474.6 L480.6 474.6 L483.4 474.6 L486.2 474.6 L489 474.6 L491.8 474.6 L494.6 474.6 L497.4 474.6 L500.2 474.6 L503 474.6 L505.8 474.6 L508.6 474.6 L511.4 474.6 L514.2 474.8 L517 475.2 L519.8 475.5 L522.7 475.9 L525.5 476.3 L528.3 476.7 L531.1 477.1 L533.9 477.5 L536.7 477.9 L539.5 478.4 L542.3 478.8 L545.1 479.3 L547.9 479.7 L550.7 480.2 L553.5 480.7 L556.3 481.2 L559.1 481.7 L561.9 482.2 L564.7 482.7 L567.5 483.3 L570.3 483.8 L573.1 484.4 L575.9 484.9 L578.7 485.5 L581.5 486.1 L584.3 486.7 L587.1 487.3 L589.9 487.9 L592.8 488.5 L595.6 489.1 L598.4 489.8 L601.2 490.4 L604 491.1 L606.8 491.8 L609.6 492.5 L612.4 493.1 L615.2 493.8 L618 494.6 L620.8 495.3 L623.6 496 L626.4 496.8 L626.4 524.8 L623.6 524.1 L620.8 523.3 L618 522.6 L615.2 521.9 L612.4 521.2 L609.6 520.5 L606.8 519.8 L604 519.1 L601.2 518.5 L598.4 517.8 L595.6 517.2 L592.8 516.5 L589.9 515.9 L587.1 515.3 L584.3 514.7 L581.5 514.1 L578.7 513.5 L575.9 513 L573.1 512.4 L570.3 511.8 L567.5 511.3 L564.7 510.8 L561.9 510.2 L559.1 509.7 L556.3 509.2 L553.5 508.7 L550.7 508.2 L547.9 507.8 L545.1 507.3 L542.3 506.9 L539.5 506.4 L536.7 506 L533.9 505.6 L531.1 505.1 L528.3 504.7 L525.5 504.3 L522.7 504 L519.8 503.6 L517 503.2 L514.2 502.9 L511.4 502.5 L508.6 502.2 L505.8 501.9 L503 501.6 L500.2 501.2 L497.4 501 L494.6 500.7 L491.8 500.4 L489 500.1 L486.2 499.9 L483.4 499.6 L480.6 499.4 L477.8 499.2 L475 499 L472.2 498.8 L469.4 498.6 L466.6 498.4 L463.8 498.2 L461 498 L458.2 497.9 L455.4 497.7 L452.6 497.6 L449.7 497.5 L446.9 497.4 L444.1 497.3 L441.3 497.2 L438.5 497.1 L435.7 497 L432.9 496.9 L430.1 496.9 L427.3 496.8 L424.5 496.8 L421.7 496.8 L418.9 496.8 L416.1 496.8 L413.3 496.8 L410.5 496.8 L407.7 496.8 L404.9 496.8 L402.1 496.9 L399.3 496.9 L396.5 497 L393.7 497.1 L390.9 497.2 L388.1 497.3 L385.3 497.4 L382.5 497.5 L379.6 497.6 L376.8 497.7 L374 497.9 L371.2 498 L368.4 498.2 L365.6 498.4 L362.8 498.6 L360 498.8 L357.2 499 L354.4 499.2 L351.6 499.4 L348.8 499.6 L346 499.9 L343.2 500.1 L340.4 500.4 L337.6 500.7 L334.8 501 L332 501.2 L329.2 501.6 L326.4 501.9 L323.6 502.2 L320.8 502.5 L318 502.9 L315.2 503.2 L312.4 503.6 L309.5 504 L306.7 504.3 L303.9 504.7 L301.1 505.1 L298.3 505.6 L295.5 506 L292.7 506.4 L289.9 506.9 L287.1 507.3 L284.3 507.8 L281.5 508.2 L278.7 508.7 L275.9 509.2 L273.1 509.7 L270.3 510.2 L267.5 510.8 L264.7 511.3 L261.9 511.8 L259.1 512.4 L256.3 513 L253.5 513.5 L250.7 514.1 L247.9 514.7 L245.1 515.3 L242.3 515.9 L239.4 516.5 L236.6 517.2 L233.8 517.8 L231 518.5 L228.2 519.1 L225.4 519.8 L222.6 520.5 L219.8 521.2 L217 521.9 L214.2 522.6 L211.4 523.3 L208.6 524.1 L205.8 524.8Z"/></clipPath>
<linearGradient id="vdiv" x1="0" y1="0" x2="1" y2="0"><stop offset="0" stop-color="#f4f6f9"/><stop offset="1" stop-color="#cdd6e3"/></linearGradient>
<linearGradient id="ptitle" x1="0" y1="0" x2="0" y2="1"><stop offset="0" stop-color="#d3e0ef"/><stop offset="1" stop-color="#c2d3e6"/></linearGradient>
<clipPath id="c5"><rect x="1114" y="411" width="394" height="318.4"/></clipPath>
<filter id="blur6" x="-20%" y="-20%" width="140%" height="140%"><feGaussianBlur stdDeviation="7"/></filter>
<linearGradient id="rtopg" gradientUnits="userSpaceOnUse" x1="1335" y1="512" x2="1274.5" y2="670.8"><stop offset="0" stop-color="#6e5e28"/><stop offset="0.2" stop-color="#7d6c34"/><stop offset="0.36" stop-color="#a3925a"/><stop offset="0.5" stop-color="#ddd2a0"/><stop offset="0.7" stop-color="#f8f3d6"/><stop offset="1" stop-color="#f1e8bc"/></linearGradient>
<linearGradient id="rflg" gradientUnits="userSpaceOnUse" x1="1180" y1="600" x2="1332" y2="670"><stop offset="0" stop-color="#c3b16c"/><stop offset="0.5" stop-color="#ddd09a"/><stop offset="1" stop-color="#e9deae"/></linearGradient>
<linearGradient id="rrsg" gradientUnits="userSpaceOnUse" x1="1402" y1="545" x2="1334" y2="670"><stop offset="0" stop-color="#a8975a"/><stop offset="0.5" stop-color="#cdbf82"/><stop offset="1" stop-color="#d8cb90"/></linearGradient>
<clipPath id="c5top"><path d="M1178.4 595.6 L1182.3 589.4 L1186.1 583.4 L1189.9 577.5 L1193.8 571.7 L1197.6 566.1 L1201.4 560.6 L1205.2 555.3 L1209 550.1 L1212.7 545.1 L1216.4 540.2 L1220.2 535.4 L1223.9 530.8 L1227.5 526.4 L1231.2 522 L1234.8 517.9 L1238.4 513.8 L1241.9 509.9 L1245.4 506.2 L1248.9 502.6 L1252.4 499.1 L1255.8 495.8 L1259.2 492.6 L1262.6 489.5 L1265.9 486.6 L1271.2 487.6 L1276.6 488.7 L1282 489.9 L1287.4 491.2 L1292.9 492.6 L1298.5 494.2 L1304.1 495.8 L1309.7 497.5 L1315.4 499.3 L1321.2 501.3 L1326.9 503.3 L1332.7 505.5 L1338.5 507.7 L1344.4 510.1 L1350.3 512.5 L1356.2 515.1 L1362.1 517.7 L1368 520.5 L1374 523.4 L1380 526.3 L1385.9 529.4 L1391.9 532.6 L1397.9 535.8 L1403.9 539.2 L1401.4 542.7 L1398.9 546.4 L1396.3 550.2 L1393.7 554.1 L1391 558.2 L1388.3 562.5 L1385.5 566.9 L1382.7 571.4 L1379.8 576.1 L1376.9 581 L1373.9 586 L1370.9 591.2 L1367.8 596.5 L1364.7 601.9 L1361.6 607.5 L1358.4 613.3 L1355.2 619.2 L1351.9 625.3 L1348.6 631.5 L1345.3 637.9 L1341.9 644.4 L1338.5 651.1 L1335.1 657.9 L1331.6 664.8 L1324.7 660.8 L1317.9 656.9 L1311.1 653 L1304.3 649.3 L1297.5 645.7 L1290.7 642.1 L1284 638.6 L1277.4 635.3 L1270.7 632 L1264.1 628.9 L1257.6 625.8 L1251.1 622.9 L1244.7 620 L1238.3 617.3 L1232 614.6 L1225.8 612.1 L1219.6 609.7 L1213.5 607.4 L1207.4 605.1 L1201.5 603 L1195.6 601 L1189.8 599.1 L1184 597.3Z"/></clipPath>
<linearGradient id="rleft" gradientUnits="userSpaceOnUse" x1="1180" y1="590" x2="1262" y2="604"><stop offset="0" stop-color="#6f6128" stop-opacity="0.95"/><stop offset="0.45" stop-color="#85753a" stop-opacity="0.7"/><stop offset="1" stop-color="#b3a466" stop-opacity="0"/></linearGradient>
<mask id="m5out" maskUnits="userSpaceOnUse" x="1170" y="480" width="240" height="200"><rect x="1170" y="480" width="240" height="200" fill="#fff"/><path d="M1325.7 567.3 L1327 565 L1328 562.7 L1328.8 560.4 L1329.3 558 L1329.5 555.6 L1329.5 553.2 L1329.2 550.9 L1328.7 548.6 L1327.9 546.3 L1326.8 544.1 L1325.5 542 L1324 540 L1322.3 538.1 L1320.4 536.4 L1318.3 534.8 L1316 533.3 L1313.5 532 L1311 530.9 L1308.3 530 L1305.5 529.2 L1302.7 528.6 L1299.8 528.3 L1296.8 528.1 L1293.8 528.1 L1290.9 528.3 L1287.9 528.7 L1285 529.3 L1282.2 530 L1279.5 531 L1276.8 532.1 L1274.3 533.4 L1271.9 534.9 L1269.7 536.5 L1267.6 538.3 L1265.8 540.1 L1264.1 542.2 L1262.7 544.3 L1261.5 546.5 L1260.5 548.7 L1259.8 551.1 L1259.4 553.4 L1259.2 555.8 L1259.3 558.2 L1259.7 560.6 L1260.3 562.9 L1261.2 565.2 L1262.3 567.5 L1263.8 569.6 L1265.4 571.6 L1267.3 573.5 L1269.4 575.3 L1271.7 576.9 L1274.2 578.3 L1276.9 579.6 L1279.7 580.7 L1282.7 581.5 L1285.7 582.2 L1288.8 582.6 L1292 582.8 L1295.1 582.8 L1298.3 582.6 L1301.4 582.1 L1304.5 581.4 L1307.5 580.6 L1310.4 579.5 L1313.1 578.2 L1315.7 576.7 L1318.1 575.1 L1320.3 573.3 L1322.3 571.4 L1324.1 569.4Z" fill="#000"/></mask>
<linearGradient id="risl" gradientUnits="userSpaceOnUse" x1="1215" y1="540" x2="1290" y2="640"><stop offset="0" stop-color="#8a7a3e"/><stop offset="0.3" stop-color="#f2ecd0"/><stop offset="0.5" stop-color="#ffffff"/><stop offset="1" stop-color="#fffef4"/></linearGradient>
<mask id="m5u" maskUnits="userSpaceOnUse" x="1170" y="480" width="240" height="200"><rect x="1170" y="480" width="240" height="200" fill="#000"/><path d="M1277.7 578.3 L1279.1 576 L1280.2 573.6 L1281.1 571.1 L1281.7 568.7 L1282.1 566.2 L1282.2 563.8 L1282 561.4 L1281.6 559.1 L1280.9 556.9 L1280 554.7 L1278.9 552.7 L1277.6 550.8 L1276 549 L1274.2 547.4 L1272.3 545.9 L1270.1 544.6 L1267.9 543.5 L1265.5 542.6 L1262.9 541.9 L1260.3 541.3 L1257.6 541 L1254.8 540.8 L1252 540.9 L1249.2 541.1 L1246.3 541.6 L1243.5 542.2 L1240.7 543.1 L1238 544.1 L1235.3 545.3 L1232.7 546.6 L1230.3 548.2 L1227.9 549.8 L1225.8 551.7 L1223.7 553.6 L1221.9 555.7 L1220.2 557.8 L1218.8 560 L1217.5 562.4 L1216.5 564.7 L1215.8 567.1 L1215.2 569.5 L1215 571.9 L1214.9 574.3 L1215.2 576.7 L1215.6 579 L1216.4 581.2 L1217.4 583.4 L1218.6 585.4 L1220.1 587.3 L1221.8 589.1 L1223.7 590.7 L1225.8 592.1 L1228.1 593.4 L1230.6 594.5 L1233.2 595.3 L1235.9 596 L1238.8 596.4 L1241.7 596.6 L1244.7 596.6 L1247.7 596.3 L1250.7 595.9 L1253.7 595.2 L1256.7 594.3 L1259.6 593.2 L1262.4 591.8 L1265.1 590.4 L1267.6 588.7 L1270 586.9 L1272.3 584.9 L1274.3 582.8 L1276.1 580.6ZM1266.3 573.6 L1267.1 572.2 L1267.8 570.7 L1268.4 569.2 L1268.8 567.7 L1269 566.2 L1269.1 564.7 L1269 563.3 L1268.8 561.8 L1268.4 560.4 L1267.9 559.1 L1267.2 557.8 L1266.4 556.7 L1265.4 555.5 L1264.4 554.5 L1263.2 553.6 L1261.8 552.8 L1260.4 552.1 L1258.9 551.5 L1257.4 551 L1255.7 550.7 L1254.1 550.5 L1252.3 550.4 L1250.6 550.4 L1248.8 550.6 L1247 550.8 L1245.3 551.2 L1243.5 551.8 L1241.8 552.4 L1240.1 553.2 L1238.5 554 L1237 555 L1235.6 556 L1234.2 557.2 L1233 558.4 L1231.8 559.7 L1230.8 561 L1229.9 562.4 L1229.2 563.8 L1228.6 565.3 L1228.1 566.8 L1227.8 568.3 L1227.7 569.8 L1227.7 571.2 L1227.8 572.7 L1228.1 574.1 L1228.6 575.5 L1229.2 576.8 L1230 578 L1230.9 579.2 L1232 580.2 L1233.2 581.2 L1234.5 582.1 L1235.9 582.8 L1237.4 583.5 L1239 584 L1240.7 584.4 L1242.4 584.6 L1244.2 584.7 L1246 584.7 L1247.9 584.6 L1249.7 584.3 L1251.6 583.9 L1253.4 583.3 L1255.1 582.6 L1256.9 581.9 L1258.5 580.9 L1260.1 579.9 L1261.5 578.8 L1262.9 577.6 L1264.2 576.4 L1265.3 575Z" fill="#fff" fill-rule="evenodd"/><path d="M1310.3 531.9 L1311.5 530.1 L1312.5 528.3 L1313.2 526.5 L1313.8 524.6 L1314 522.7 L1314.1 520.9 L1313.8 519.1 L1313.4 517.3 L1312.7 515.6 L1311.8 513.9 L1310.7 512.3 L1309.3 510.8 L1307.8 509.4 L1306.1 508.1 L1304.2 506.9 L1302.1 505.9 L1299.9 504.9 L1297.6 504.1 L1295.2 503.5 L1292.7 503 L1290.1 502.6 L1287.5 502.4 L1284.8 502.3 L1282.1 502.4 L1279.4 502.6 L1276.7 503 L1274.1 503.5 L1271.5 504.2 L1269 505 L1266.5 505.9 L1264.2 507 L1262 508.2 L1260 509.5 L1258.1 510.9 L1256.3 512.4 L1254.8 514 L1253.4 515.6 L1252.3 517.4 L1251.4 519.1 L1250.7 521 L1250.2 522.8 L1250 524.6 L1250 526.5 L1250.3 528.3 L1250.8 530.1 L1251.5 531.9 L1252.5 533.6 L1253.7 535.2 L1255.2 536.7 L1256.9 538.1 L1258.8 539.4 L1260.8 540.6 L1263.1 541.7 L1265.5 542.6 L1268 543.4 L1270.7 544 L1273.4 544.4 L1276.2 544.6 L1279.1 544.7 L1282 544.6 L1284.9 544.4 L1287.8 544 L1290.6 543.4 L1293.3 542.6 L1296 541.7 L1298.5 540.7 L1300.9 539.5 L1303.2 538.1 L1305.2 536.7 L1307.1 535.2 L1308.8 533.6ZM1299.3 527.7 L1300 526.6 L1300.7 525.5 L1301.2 524.4 L1301.5 523.2 L1301.7 522.1 L1301.7 521 L1301.6 519.8 L1301.4 518.7 L1301 517.7 L1300.4 516.6 L1299.7 515.6 L1298.9 514.7 L1298 513.8 L1296.9 513 L1295.8 512.3 L1294.5 511.6 L1293.1 511 L1291.7 510.5 L1290.2 510.1 L1288.6 509.8 L1287 509.5 L1285.4 509.4 L1283.7 509.3 L1282 509.4 L1280.3 509.5 L1278.7 509.8 L1277 510.1 L1275.4 510.5 L1273.8 511 L1272.3 511.6 L1270.9 512.3 L1269.5 513 L1268.2 513.9 L1267.1 514.7 L1266 515.7 L1265.1 516.7 L1264.2 517.7 L1263.5 518.8 L1263 519.9 L1262.6 521 L1262.3 522.1 L1262.2 523.3 L1262.2 524.4 L1262.4 525.5 L1262.8 526.6 L1263.2 527.7 L1263.9 528.7 L1264.7 529.7 L1265.6 530.6 L1266.6 531.5 L1267.8 532.3 L1269 533 L1270.4 533.6 L1271.9 534.2 L1273.4 534.6 L1275.1 535 L1276.7 535.3 L1278.4 535.4 L1280.2 535.5 L1282 535.4 L1283.7 535.3 L1285.5 535 L1287.2 534.6 L1288.9 534.2 L1290.5 533.6 L1292 533 L1293.5 532.3 L1294.9 531.5 L1296.2 530.6 L1297.3 529.7 L1298.4 528.7Z" fill="#fff" fill-rule="evenodd"/><path d="M1339.4 608.4 L1340.7 605.9 L1341.7 603.3 L1342.4 600.7 L1342.9 598 L1343.1 595.3 L1343 592.6 L1342.7 589.9 L1342.1 587.2 L1341.3 584.6 L1340.2 582.1 L1338.9 579.7 L1337.4 577.3 L1335.6 575.1 L1333.7 573.1 L1331.6 571.2 L1329.3 569.5 L1326.8 567.9 L1324.2 566.6 L1321.6 565.4 L1318.8 564.5 L1315.9 563.7 L1313 563.2 L1310 562.9 L1307.1 562.9 L1304.1 563 L1301.2 563.4 L1298.3 564 L1295.5 564.8 L1292.7 565.9 L1290.1 567.1 L1287.6 568.5 L1285.3 570.2 L1283.1 572 L1281.1 573.9 L1279.3 576.1 L1277.7 578.3 L1276.3 580.7 L1275.2 583.2 L1274.3 585.8 L1273.7 588.4 L1273.3 591.1 L1273.2 593.8 L1273.4 596.6 L1273.8 599.3 L1274.5 602 L1275.4 604.6 L1276.6 607.2 L1278.1 609.6 L1279.8 612 L1281.8 614.2 L1283.9 616.2 L1286.2 618.1 L1288.8 619.7 L1291.4 621.2 L1294.2 622.5 L1297.2 623.5 L1300.2 624.3 L1303.3 624.9 L1306.4 625.2 L1309.5 625.2 L1312.6 625 L1315.7 624.6 L1318.8 623.9 L1321.7 623 L1324.5 621.8 L1327.2 620.5 L1329.7 618.9 L1332.1 617.1 L1334.3 615.1 L1336.2 613 L1337.9 610.8ZM1327.4 601.9 L1328.2 600.4 L1328.8 598.8 L1329.3 597.2 L1329.6 595.5 L1329.7 593.9 L1329.7 592.2 L1329.5 590.5 L1329.2 588.9 L1328.7 587.3 L1328.1 585.7 L1327.3 584.2 L1326.3 582.7 L1325.2 581.4 L1324 580.1 L1322.7 578.9 L1321.3 577.8 L1319.8 576.8 L1318.2 576 L1316.5 575.3 L1314.8 574.7 L1313 574.2 L1311.2 573.9 L1309.3 573.7 L1307.5 573.7 L1305.6 573.8 L1303.8 574 L1302 574.4 L1300.3 574.9 L1298.6 575.6 L1297 576.4 L1295.4 577.3 L1294 578.3 L1292.6 579.4 L1291.4 580.6 L1290.3 582 L1289.3 583.4 L1288.5 584.9 L1287.8 586.4 L1287.3 588 L1286.9 589.6 L1286.7 591.3 L1286.6 593 L1286.7 594.7 L1287 596.3 L1287.5 598 L1288.1 599.6 L1288.8 601.1 L1289.8 602.6 L1290.8 604.1 L1292 605.4 L1293.3 606.6 L1294.8 607.8 L1296.3 608.8 L1298 609.7 L1299.7 610.4 L1301.5 611.1 L1303.3 611.6 L1305.2 611.9 L1307.1 612.1 L1309 612.1 L1310.9 612 L1312.8 611.7 L1314.6 611.3 L1316.4 610.8 L1318.2 610.1 L1319.8 609.2 L1321.4 608.3 L1322.8 607.2 L1324.2 606 L1325.4 604.7 L1326.5 603.4Z" fill="#fff" fill-rule="evenodd"/><path d="M1369.1 559.3 L1370.2 557.4 L1371 555.4 L1371.6 553.4 L1372 551.3 L1372.1 549.2 L1371.9 547.1 L1371.6 544.9 L1370.9 542.8 L1370.1 540.7 L1369 538.7 L1367.7 536.7 L1366.2 534.8 L1364.5 533 L1362.6 531.3 L1360.6 529.7 L1358.4 528.2 L1356 526.8 L1353.6 525.6 L1351 524.5 L1348.4 523.6 L1345.7 522.9 L1343 522.3 L1340.2 521.9 L1337.4 521.6 L1334.7 521.6 L1331.9 521.7 L1329.3 522 L1326.6 522.4 L1324.1 523.1 L1321.7 523.9 L1319.4 524.8 L1317.2 525.9 L1315.2 527.2 L1313.4 528.6 L1311.7 530.2 L1310.3 531.9 L1309 533.6 L1308 535.5 L1307.2 537.5 L1306.7 539.5 L1306.4 541.6 L1306.3 543.8 L1306.5 545.9 L1307 548.1 L1307.7 550.3 L1308.7 552.4 L1309.9 554.5 L1311.3 556.6 L1313 558.5 L1314.9 560.4 L1317 562.1 L1319.2 563.8 L1321.7 565.2 L1324.2 566.6 L1326.9 567.7 L1329.7 568.7 L1332.6 569.6 L1335.5 570.2 L1338.5 570.6 L1341.5 570.8 L1344.4 570.9 L1347.3 570.7 L1350.1 570.3 L1352.9 569.8 L1355.5 569 L1358 568.1 L1360.3 567 L1362.5 565.7 L1364.5 564.3 L1366.2 562.8 L1367.8 561.1ZM1357.7 553.3 L1358.3 552.2 L1358.9 550.9 L1359.3 549.7 L1359.5 548.4 L1359.6 547.1 L1359.5 545.8 L1359.3 544.5 L1359 543.2 L1358.4 541.9 L1357.8 540.6 L1357 539.4 L1356.1 538.2 L1355 537.1 L1353.9 536 L1352.6 535 L1351.2 534 L1349.8 533.2 L1348.3 532.4 L1346.7 531.8 L1345 531.2 L1343.4 530.7 L1341.6 530.3 L1339.9 530.1 L1338.2 529.9 L1336.5 529.9 L1334.7 530 L1333.1 530.2 L1331.4 530.5 L1329.9 530.9 L1328.4 531.4 L1326.9 532 L1325.6 532.7 L1324.4 533.5 L1323.2 534.4 L1322.2 535.3 L1321.4 536.4 L1320.6 537.5 L1320 538.7 L1319.5 539.9 L1319.2 541.2 L1319.1 542.4 L1319.1 543.8 L1319.2 545.1 L1319.5 546.4 L1320 547.8 L1320.6 549.1 L1321.4 550.3 L1322.3 551.6 L1323.3 552.8 L1324.4 553.9 L1325.7 555 L1327.1 555.9 L1328.6 556.8 L1330.2 557.7 L1331.8 558.4 L1333.5 559 L1335.3 559.5 L1337.1 559.8 L1338.9 560.1 L1340.7 560.3 L1342.5 560.3 L1344.2 560.2 L1346 560 L1347.6 559.6 L1349.2 559.2 L1350.8 558.6 L1352.2 558 L1353.5 557.2 L1354.8 556.4 L1355.9 555.4 L1356.8 554.4Z" fill="#fff" fill-rule="evenodd"/><path d="M1325.7 567.3 L1327 565 L1328 562.7 L1328.8 560.4 L1329.3 558 L1329.5 555.6 L1329.5 553.2 L1329.2 550.9 L1328.7 548.6 L1327.9 546.3 L1326.8 544.1 L1325.5 542 L1324 540 L1322.3 538.1 L1320.4 536.4 L1318.3 534.8 L1316 533.3 L1313.5 532 L1311 530.9 L1308.3 530 L1305.5 529.2 L1302.7 528.6 L1299.8 528.3 L1296.8 528.1 L1293.8 528.1 L1290.9 528.3 L1287.9 528.7 L1285 529.3 L1282.2 530 L1279.5 531 L1276.8 532.1 L1274.3 533.4 L1271.9 534.9 L1269.7 536.5 L1267.6 538.3 L1265.8 540.1 L1264.1 542.2 L1262.7 544.3 L1261.5 546.5 L1260.5 548.7 L1259.8 551.1 L1259.4 553.4 L1259.2 555.8 L1259.3 558.2 L1259.7 560.6 L1260.3 562.9 L1261.2 565.2 L1262.3 567.5 L1263.8 569.6 L1265.4 571.6 L1267.3 573.5 L1269.4 575.3 L1271.7 576.9 L1274.2 578.3 L1276.9 579.6 L1279.7 580.7 L1282.7 581.5 L1285.7 582.2 L1288.8 582.6 L1292 582.8 L1295.1 582.8 L1298.3 582.6 L1301.4 582.1 L1304.5 581.4 L1307.5 580.6 L1310.4 579.5 L1313.1 578.2 L1315.7 576.7 L1318.1 575.1 L1320.3 573.3 L1322.3 571.4 L1324.1 569.4Z" fill="#000"/><path d="M1325.7 567.3 L1327 565 L1328 562.7 L1328.8 560.4 L1329.3 558 L1329.5 555.6 L1329.5 553.2 L1329.2 550.9 L1328.7 548.6 L1327.9 546.3 L1326.8 544.1 L1325.5 542 L1324 540 L1322.3 538.1 L1320.4 536.4 L1318.3 534.8 L1316 533.3 L1313.5 532 L1311 530.9 L1308.3 530 L1305.5 529.2 L1302.7 528.6 L1299.8 528.3 L1296.8 528.1 L1293.8 528.1 L1290.9 528.3 L1287.9 528.7 L1285 529.3 L1282.2 530 L1279.5 531 L1276.8 532.1 L1274.3 533.4 L1271.9 534.9 L1269.7 536.5 L1267.6 538.3 L1265.8 540.1 L1264.1 542.2 L1262.7 544.3 L1261.5 546.5 L1260.5 548.7 L1259.8 551.1 L1259.4 553.4 L1259.2 555.8 L1259.3 558.2 L1259.7 560.6 L1260.3 562.9 L1261.2 565.2 L1262.3 567.5 L1263.8 569.6 L1265.4 571.6 L1267.3 573.5 L1269.4 575.3 L1271.7 576.9 L1274.2 578.3 L1276.9 579.6 L1279.7 580.7 L1282.7 581.5 L1285.7 582.2 L1288.8 582.6 L1292 582.8 L1295.1 582.8 L1298.3 582.6 L1301.4 582.1 L1304.5 581.4 L1307.5 580.6 L1310.4 579.5 L1313.1 578.2 L1315.7 576.7 L1318.1 575.1 L1320.3 573.3 L1322.3 571.4 L1324.1 569.4ZM1315.2 562.4 L1316.1 560.9 L1316.8 559.4 L1317.4 557.8 L1317.7 556.2 L1317.9 554.6 L1317.9 553 L1317.7 551.4 L1317.4 549.9 L1316.9 548.4 L1316.2 546.9 L1315.3 545.5 L1314.3 544.1 L1313.2 542.9 L1311.9 541.7 L1310.5 540.6 L1308.9 539.6 L1307.3 538.7 L1305.6 537.9 L1303.8 537.3 L1301.9 536.8 L1300 536.4 L1298 536.1 L1296 536 L1294 536 L1292 536.1 L1290 536.4 L1288 536.8 L1286.1 537.3 L1284.3 538 L1282.5 538.8 L1280.8 539.7 L1279.2 540.7 L1277.7 541.7 L1276.3 542.9 L1275.1 544.2 L1274 545.6 L1273.1 547 L1272.3 548.5 L1271.7 550 L1271.2 551.6 L1270.9 553.2 L1270.8 554.8 L1270.9 556.4 L1271.2 557.9 L1271.6 559.5 L1272.2 561 L1273 562.5 L1274 563.9 L1275.1 565.2 L1276.4 566.5 L1277.8 567.7 L1279.3 568.7 L1281 569.7 L1282.8 570.5 L1284.6 571.2 L1286.6 571.8 L1288.6 572.2 L1290.7 572.5 L1292.8 572.6 L1294.9 572.6 L1296.9 572.4 L1299 572.1 L1301.1 571.7 L1303 571.1 L1305 570.4 L1306.8 569.6 L1308.5 568.6 L1310.1 567.6 L1311.6 566.4 L1313 565.1 L1314.2 563.8Z" fill="#fff" fill-rule="evenodd"/></mask>
<filter id="gv5" x="-5%" y="-5%" width="110%" height="110%" color-interpolation-filters="sRGB">
<feComponentTransfer in="SourceAlpha" result="inv"><feFuncA type="table" tableValues="1 0"/></feComponentTransfer>
<feGaussianBlur in="inv" stdDeviation="0.5" result="b1"/>
<feOffset in="b1" dx="1.0" dy="3.9" result="o1"/>
<feComposite in="o1" in2="SourceAlpha" operator="in" result="sh"/>
<feFlood flood-color="#c89a00" flood-opacity="1" result="dk"/>
<feComposite in="dk" in2="sh" operator="in" result="dark"/>
<feOffset in="inv" dx="-1.15" dy="-4.484999999999999" result="o2"/>
<feOffset in="inv" dx="-0.75" dy="-2.925" result="o3"/>
<feComposite in="o2" in2="o3" operator="out" result="band0"/>
<feGaussianBlur in="band0" stdDeviation="0.4" result="band1"/>
<feComposite in="band1" in2="SourceAlpha" operator="in" result="hl"/>
<feFlood flood-color="#ffffff" flood-opacity="1" result="lt"/>
<feComposite in="lt" in2="hl" operator="in" result="light"/>
<feGaussianBlur in="inv" stdDeviation="0.95" result="b2"/>
<feOffset in="b2" dx="1.7" dy="6.63" result="o4"/>
<feComposite in="o4" in2="SourceAlpha" operator="in" result="sh2"/>
<feFlood flood-color="#c89a00" flood-opacity="0.9" result="dk2"/>
<feComposite in="dk2" in2="sh2" operator="in" result="dark2"/>
<feMerge><feMergeNode in="SourceGraphic"/><feMergeNode in="dark2"/><feMergeNode in="dark"/><feMergeNode in="light"/></feMerge></filter>
<linearGradient id="rgr" gradientUnits="userSpaceOnUse" x1="1230" y1="510" x2="1330" y2="650"><stop offset="0" stop-color="#c9a21c"/><stop offset="0.35" stop-color="#e9d680"/><stop offset="0.6" stop-color="#fbf6d8"/><stop offset="1" stop-color="#fffdf0"/></linearGradient></defs>
<rect width="1743" height="761" fill="#e4e7eb"/>
<g clip-path="url(#c1)">
<rect x="0" y="0" width="886" height="360" fill="#fafbfc"/>
<path d="M-35.5 0V360 M39.5 0V360 M113.5 0V360 M188.5 0V360 M262.5 0V360 M337.5 0V360 M486.5 0V360 M561.5 0V360 M635.5 0V360 M710.5 0V360 M785.5 0V360 M859.5 0V360 M934.5 0V360 M0 44.5H886 M0 118.5H886 M0 268.5H886 M0 343.5H886 M0 193.5H300 M412.5 306V360" stroke="#808080" stroke-width="1" fill="none"/>
<path d="M412.3 0V83" stroke="#3f8f46" stroke-width="1.5"/>
<path d="M524 193.4H886" stroke="#8e2f3a" stroke-width="1.4"/>
<rect x="300.2" y="82.4" width="223.8" height="223.6" fill="url(#tvbase)"/>
<rect x="300.2" y="82.4" width="223.8" height="223.6" fill="url(#tvhl)"/>
<g filter="url(#gv1)"><rect x="280" y="60" width="270" height="270" fill="url(#tvgr)" mask="url(#m1u)"/></g>
<rect x="300.2" y="82.4" width="223.8" height="223.6" fill="url(#tvhl)" opacity="0.18" mask="url(#m1u)"/>
<g mask="url(#m1p)"><circle cx="412.1" cy="194.2" r="46.1" fill="none" stroke="#f6cf30" stroke-width="1.3" opacity="0.85"/></g>
<path d="M300.2 28V74.5M524.2 28V74.5M300.2 35.4H524.2" stroke="#222" stroke-width="1" fill="none"/>
<path d="M300.4 35.4l15-3.6v7.2zM524 35.4l-15-3.6v7.2z" fill="#000"/>
<text x="413.6" y="31.2" font-size="20.2" text-anchor="middle" fill="#111">15.00</text>
<g transform="translate(824.5,44.5)"><path d="M-27.5 5.2C-20 1.5-12 -1-6 -2.5C-3 -4.6 3 -4.6 6 -2.5C12 -1 20 1.5 27.5 5.2L26.5 6.4C19 3.6 12 2 7 1.6C3 3.4-3 3.4-7 1.6C-12 2-19 3.6-26.5 6.4Z" fill="#6b6657"/><ellipse cx="0" cy="-0.4" rx="11" ry="3.5" fill="#8d8770"/><ellipse cx="0" cy="-0.6" rx="7" ry="3.2" fill="#bdb69c"/><ellipse cx="-0.5" cy="-0.8" rx="2.6" ry="3" fill="#e6e0cc"/><rect x="-10.4" y="2.4" width="3.6" height="6.6" rx="1.2" fill="#c9c3ad"/><rect x="7" y="2.4" width="3.6" height="6.6" rx="1.2" fill="#c9c3ad"/></g>
</g>
<g clip-path="url(#c2)">
<rect x="889" y="0" width="854" height="360" fill="#808080"/>
<rect x="1036.5" y="-5" width="661.5" height="363.4" fill="#6d6d6d"/>
<path d="M1059.5 -417L-1146.3 590.2 M1084.7 -411.7L-1147.9 645.6 M1110.5 -406.4L-1149.7 705.3 M1136.8 -400.9L-1151.7 769.8 M1163.8 -395.2L-1153.8 840 M1191.5 -389.5L-1156.1 916.4 M1219.9 -383.6L-1158.6 1000 M1248.9 -377.5L-1161.4 1091.8 M1278.7 -371.3L-1164.5 1193 M1309.3 -365L-1167.8 1305.4 M1340.7 -358.4L-1171.6 1430.7 M1372.9 -351.7L-1175.9 1571.3 M1405.9 -344.9L-1180.7 1730.3 M1439.9 -337.8L-1186.1 1911.4 M1474.7 -330.5L-1192.4 2119.7 M1510.6 -323.1L-1199.7 2361.7 M1547.5 -315.4L-1208.3 2646.5 M1585.4 -307.5L-1218.6 2986.4 M1624.4 -299.4L-1231.1 3399 M1346.1 168.6L-1246.5 3910.6 M1705.9 -282.4L-1266.2 4561.7 M1748.5 -273.5L-1292 5418.2 M1792.5 -264.4L-1327.6 6595.7 M1837.8 -255L-1125 7637.7 M1884.5 -245.2L-447.2 7635 M1932.8 -235.2L230.6 7632.4 M1982.6 -224.8L908.4 7629.7 M2034.2 -214.1L1586.2 7627.1 M2087.4 -203L2264 7624.4 M2142.5 -191.5L2941.8 7621.8 M2199.6 -179.7L3619.6 7619.1 M2258.6 -167.4L4297.4 7616.4 M2319.9 -154.6L4975.2 7613.8 M2383.4 -141.4L5653 7611.1 M2449.3 -127.7L6330.8 7608.5 M2517.7 -113.4L7008.6 7605.8 M2588.9 -98.6L7686.4 7603.2 M2662.9 -83.2L8364.2 7600.5 M2739.9 -67.2L9042 7597.8 M2820.1 -50.5L9719.8 7595.2 M2903.8 -33.1L10397.6 7592.5 M2991.1 -14.9L11075.4 7589.9 M3082.3 4L11753.2 7587.2 M3177.6 23.9L12431 7584.5 M3277.4 44.7L13108.8 7581.9 M3382 66.4L13786.6 7579.2 M3491.6 89.3L14464.4 7576.6 M3606.8 113.2L15142.2 7573.9 M3727.9 138.4L15820 7571.3 M3855.4 165L16497.8 7568.6 M3989.8 192.9L17175.6 7565.9 M4131.7 222.5L17853.4 7563.3 M4281.7 253.7L18531.2 7560.6 M4440.6 286.8L19209 7558 M1059.5 -417L4609.1 321.8 M1037.4 -406.8L4761.3 393.9 M1014.2 -396.3L4932.9 475.1 M990 -385.2L5127.9 567.4 M964.6 -373.6L5351.4 673.3 M938.1 -361.5L5610.1 795.8 M910.2 -348.8L5913.2 939.3 M880.9 -335.4L6273.1 1109.7 M850.1 -321.3L6707.5 1315.3 M817.7 -306.5L7241.9 1568.4 M783.5 -290.9L7915.8 1887.4 M747.4 -274.4L8791.5 2302.1 M709.2 -257L9976.1 2862.9 M668.8 -238.5L11667.7 3663.8 M625.8 -218.9L14280.5 4900.9 M580.2 -198.1L18848.6 7063.7 M531.6 -175.9L1346.1 168.6 M479.7 -152.2L17560.6 7564.4 M424.2 -126.9L16299.3 7569.4 M364.7 -99.7L15038 7574.3 M300.7 -70.5L13776.7 7579.3 M231.8 -39L12515.4 7584.2 M157.2 -5L11254.1 7589.2 M76.4 32L9992.7 7594.1 M-11.6 72.1L8731.4 7599.1 M-107.6 116L7470.1 7604 M-213 164.1L6208.8 7608.9 M-329 217.1L4947.5 7613.9 M-457.5 275.7L3686.2 7618.8 M-600.5 341L2424.9 7623.8 M-760.6 414.1L1163.5 7628.7 M-941.1 496.6L-97.8 7633.7 M-1146.3 590.2L-1359.1 7638.6" stroke="#9f9d9b" stroke-width="1" fill="none"/>
<g clip-path="url(#c2in)"><path d="M1059.5 -417L-1146.3 590.2 M1084.7 -411.7L-1147.9 645.6 M1110.5 -406.4L-1149.7 705.3 M1136.8 -400.9L-1151.7 769.8 M1163.8 -395.2L-1153.8 840 M1191.5 -389.5L-1156.1 916.4 M1219.9 -383.6L-1158.6 1000 M1248.9 -377.5L-1161.4 1091.8 M1278.7 -371.3L-1164.5 1193 M1309.3 -365L-1167.8 1305.4 M1340.7 -358.4L-1171.6 1430.7 M1372.9 -351.7L-1175.9 1571.3 M1405.9 -344.9L-1180.7 1730.3 M1439.9 -337.8L-1186.1 1911.4 M1474.7 -330.5L-1192.4 2119.7 M1510.6 -323.1L-1199.7 2361.7 M1547.5 -315.4L-1208.3 2646.5 M1585.4 -307.5L-1218.6 2986.4 M1624.4 -299.4L-1231.1 3399 M1346.1 168.6L-1246.5 3910.6 M1705.9 -282.4L-1266.2 4561.7 M1748.5 -273.5L-1292 5418.2 M1792.5 -264.4L-1327.6 6595.7 M1837.8 -255L-1125 7637.7 M1884.5 -245.2L-447.2 7635 M1932.8 -235.2L230.6 7632.4 M1982.6 -224.8L908.4 7629.7 M2034.2 -214.1L1586.2 7627.1 M2087.4 -203L2264 7624.4 M2142.5 -191.5L2941.8 7621.8 M2199.6 -179.7L3619.6 7619.1 M2258.6 -167.4L4297.4 7616.4 M2319.9 -154.6L4975.2 7613.8 M2383.4 -141.4L5653 7611.1 M2449.3 -127.7L6330.8 7608.5 M2517.7 -113.4L7008.6 7605.8 M2588.9 -98.6L7686.4 7603.2 M2662.9 -83.2L8364.2 7600.5 M2739.9 -67.2L9042 7597.8 M2820.1 -50.5L9719.8 7595.2 M2903.8 -33.1L10397.6 7592.5 M2991.1 -14.9L11075.4 7589.9 M3082.3 4L11753.2 7587.2 M3177.6 23.9L12431 7584.5 M3277.4 44.7L13108.8 7581.9 M3382 66.4L13786.6 7579.2 M3491.6 89.3L14464.4 7576.6 M3606.8 113.2L15142.2 7573.9 M3727.9 138.4L15820 7571.3 M3855.4 165L16497.8 7568.6 M3989.8 192.9L17175.6 7565.9 M4131.7 222.5L17853.4 7563.3 M4281.7 253.7L18531.2 7560.6 M4440.6 286.8L19209 7558 M1059.5 -417L4609.1 321.8 M1037.4 -406.8L4761.3 393.9 M1014.2 -396.3L4932.9 475.1 M990 -385.2L5127.9 567.4 M964.6 -373.6L5351.4 673.3 M938.1 -361.5L5610.1 795.8 M910.2 -348.8L5913.2 939.3 M880.9 -335.4L6273.1 1109.7 M850.1 -321.3L6707.5 1315.3 M817.7 -306.5L7241.9 1568.4 M783.5 -290.9L7915.8 1887.4 M747.4 -274.4L8791.5 2302.1 M709.2 -257L9976.1 2862.9 M668.8 -238.5L11667.7 3663.8 M625.8 -218.9L14280.5 4900.9 M580.2 -198.1L18848.6 7063.7 M531.6 -175.9L1346.1 168.6 M479.7 -152.2L17560.6 7564.4 M424.2 -126.9L16299.3 7569.4 M364.7 -99.7L15038 7574.3 M300.7 -70.5L13776.7 7579.3 M231.8 -39L12515.4 7584.2 M157.2 -5L11254.1 7589.2 M76.4 32L9992.7 7594.1 M-11.6 72.1L8731.4 7599.1 M-107.6 116L7470.1 7604 M-213 164.1L6208.8 7608.9 M-329 217.1L4947.5 7613.9 M-457.5 275.7L3686.2 7618.8 M-600.5 341L2424.9 7623.8 M-760.6 414.1L1163.5 7628.7 M-941.1 496.6L-97.8 7633.7 M-1146.3 590.2L-1359.1 7638.6" stroke="#d9d9d9" stroke-width="0.95" fill="none"/>
<path d="M1346.1 168.6L1664.6 -291" stroke="#5fb06a" stroke-width="2"/>
<path d="M1346.1 168.6L12017.6 4681.8" stroke="#b65c5c" stroke-width="2.1"/>
</g>
<rect x="1036.5" y="-5" width="661.5" height="363.4" fill="none" stroke="#b0af74" stroke-width="1.9"/>
<rect x="1068" y="5" width="598.5" height="336.7" fill="none" stroke="#6db0b0" stroke-width="1.9"/>
<rect x="1101" y="24" width="532" height="299" fill="none" stroke="#b3926a" stroke-width="1.9"/>
<path d="M1346.1 168.6L12017.6 4681.8" stroke="#a08080" stroke-width="1.4" opacity="0.55"/>
<rect x="1036.5" y="0" width="661.5" height="358.4" fill="none"/>
<path d="M1394.8 301 L1399.5 291.9 L1404.2 283 L1408.8 274.3 L1413.3 265.7 L1417.8 257.4 L1422.2 249.2 L1426.6 241.2 L1430.9 233.4 L1435.1 225.8 L1439.3 218.4 L1443.4 211.2 L1447.5 204.1 L1451.4 197.3 L1455.4 190.6 L1459.2 184.1 L1463 177.8 L1466.7 171.6 L1470.3 165.7 L1473.9 159.9 L1477.4 154.3 L1480.8 148.9 L1484.2 143.7 L1487.5 138.7 L1490.8 133.8 L1488.1 147.3 L1393.6 315.6Z" fill="#0c0800"/>
<path d="M1191.3 205.8 L1198.9 208.4 L1206.6 211.1 L1214.3 213.9 L1222.2 216.8 L1230.1 219.9 L1238.1 223.1 L1246.3 226.3 L1254.5 229.8 L1262.8 233.3 L1271.1 237 L1279.6 240.8 L1288.1 244.7 L1296.7 248.7 L1305.3 252.9 L1314 257.2 L1322.8 261.6 L1331.7 266.1 L1340.5 270.7 L1349.5 275.5 L1358.5 280.4 L1367.5 285.4 L1376.6 290.5 L1385.7 295.7 L1394.8 301 L1393.6 315.6 L1194.7 219.9Z" fill="url(#pvfl)"/>
<path d="M1191.3 205.8 L1196.6 197.9 L1201.9 190.2 L1207.1 182.6 L1212.3 175.2 L1217.4 168 L1222.6 160.9 L1227.6 154 L1232.7 147.3 L1237.7 140.8 L1242.7 134.4 L1247.6 128.2 L1252.5 122.2 L1257.3 116.4 L1262.1 110.7 L1266.8 105.2 L1271.5 99.8 L1276.2 94.6 L1280.8 89.6 L1285.3 84.8 L1289.8 80.1 L1294.3 75.6 L1298.7 71.2 L1303 67 L1307.3 63 L1314.4 64.6 L1321.5 66.3 L1328.7 68.1 L1336 70 L1343.3 72.1 L1350.7 74.3 L1358.1 76.6 L1365.6 79 L1373.2 81.5 L1380.8 84.2 L1388.4 86.9 L1396.1 89.8 L1403.8 92.8 L1411.6 96 L1419.4 99.2 L1427.2 102.6 L1435.1 106.1 L1443 109.7 L1450.9 113.4 L1458.9 117.3 L1466.8 121.2 L1474.8 125.3 L1482.8 129.5 L1490.8 133.8 L1487.5 138.7 L1484.2 143.7 L1480.8 148.9 L1477.4 154.3 L1473.9 159.9 L1470.3 165.7 L1466.7 171.6 L1463 177.8 L1459.2 184.1 L1455.4 190.6 L1451.4 197.3 L1447.5 204.1 L1443.4 211.2 L1439.3 218.4 L1435.1 225.8 L1430.9 233.4 L1426.6 241.2 L1422.2 249.2 L1417.8 257.4 L1413.3 265.7 L1408.8 274.3 L1404.2 283 L1399.5 291.9 L1394.8 301 L1385.7 295.7 L1376.6 290.5 L1367.5 285.4 L1358.5 280.4 L1349.5 275.5 L1340.5 270.7 L1331.7 266.1 L1322.8 261.6 L1314 257.2 L1305.3 252.9 L1296.7 248.7 L1288.1 244.7 L1279.6 240.8 L1271.1 237 L1262.8 233.3 L1254.5 229.8 L1246.3 226.3 L1238.1 223.1 L1230.1 219.9 L1222.2 216.8 L1214.3 213.9 L1206.6 211.1 L1198.9 208.4Z" fill="url(#pvtop)"/>
<g filter="url(#gv2)"><rect x="1180" y="50" width="330" height="270" fill="url(#pvgr)" mask="url(#m2u)"/></g>
<g mask="url(#m2p)"><path d="M1387.6 170.4 L1389.3 167.4 L1390.7 164.4 L1391.7 161.3 L1392.4 158.1 L1392.7 154.9 L1392.7 151.8 L1392.3 148.6 L1391.5 145.5 L1390.4 142.5 L1389 139.6 L1387.3 136.8 L1385.3 134.1 L1383 131.6 L1380.4 129.3 L1377.6 127.1 L1374.6 125.2 L1371.3 123.5 L1367.9 122 L1364.4 120.7 L1360.7 119.6 L1356.9 118.8 L1353 118.3 L1349.1 118 L1345.2 118 L1341.3 118.2 L1337.4 118.7 L1333.5 119.5 L1329.8 120.5 L1326.2 121.7 L1322.7 123.2 L1319.3 124.9 L1316.2 126.8 L1313.2 128.9 L1310.5 131.2 L1308.1 133.7 L1305.9 136.3 L1304 139.1 L1302.4 142 L1301.1 145 L1300.2 148 L1299.6 151.2 L1299.4 154.3 L1299.5 157.5 L1299.9 160.7 L1300.8 163.8 L1302 166.8 L1303.5 169.8 L1305.4 172.7 L1307.5 175.4 L1310.1 177.9 L1312.9 180.3 L1315.9 182.5 L1319.2 184.4 L1322.8 186.1 L1326.5 187.6 L1330.4 188.8 L1334.5 189.7 L1338.6 190.3 L1342.8 190.6 L1347 190.6 L1351.2 190.4 L1355.4 189.8 L1359.5 189 L1363.4 187.8 L1367.3 186.4 L1370.9 184.8 L1374.4 182.9 L1377.6 180.7 L1380.5 178.4 L1383.2 175.9 L1385.6 173.2Z" fill="none" stroke="#f3c92a" stroke-width="1.2" opacity="0.8"/></g>
<path d="M1328.5 37.2L1506.9 102.9M1311.4 57.8L1330.3 33.9M1493.1 127.7L1509.7 100.1M1355.5 155.5L1516.6 221.5M1444.3 228.5L1506.8 255.4M1508.3 219.3L1501.5 250.5M1154.2 188.9L1185.2 203.3M1156.3 204.2L1189.9 220.1M1150.5 176.8L1154.2 188.4M1165.7 218.4L1162 209.4" stroke="#151515" stroke-width="1" fill="none"/>
<path d="M1328.5 37.2L1339.9 43.9L1341.5 39.5ZM1506.9 102.9L1495.5 96.2L1493.9 100.6ZM1508.3 219.3L1503.8 227.5L1508.9 228.6ZM1501.5 250.5L1506 242.3L1500.9 241.2ZM1154.4 188.9L1153.5 180.8L1150.4 181.8ZM1161.6 208.6L1163.2 216.6L1166.2 215.4Z" fill="#0a0a0a"/>
<text transform="matrix(0.9397 0.342 -0.357 0.59 1400 61.4)" font-size="16.8" fill="#111">15.00</text>
<text transform="matrix(0.213 -0.978 0.928 0.372 1495.6 246.4)" font-size="14.2" fill="#111">4.00</text>
<text transform="matrix(0.1 -0.5 1.25 0.58 1154.2 198)" font-size="11.5" fill="#111">2.00</text>
<rect x="889" y="0" width="87" height="5" fill="#8fabd2"/><path d="M920.6 0V3M965.6 0V3.5" stroke="#1c2a44" stroke-width="1.2"/>
</g>
<g clip-path="url(#c3)">
<rect x="0" y="363" width="886" height="375" fill="#fafbfc"/>
<path d="M-32.5 363V738 M23.5 363V738 M51.5 363V738 M79.5 363V738 M107.5 363V738 M163.5 363V738 M191.5 363V738 M219.5 363V738 M247.5 363V738 M303.5 363V738 M331.5 363V738 M360.5 363V738 M388.5 363V738 M444.5 363V738 M472.5 363V738 M500.5 363V738 M528.5 363V738 M584.5 363V738 M612.5 363V738 M640.5 363V738 M668.5 363V738 M724.5 363V738 M752.5 363V738 M780.5 363V738 M808.5 363V738 M864.5 363V738 M892.5 363V738 M0 356.5H886 M0 412.5H886 M0 440.5H886 M0 468.5H886 M0 496.5H886 M0 552.5H886 M0 581.5H886 M0 609.5H886 M0 637.5H886 M0 693.5H886 M0 721.5H886 M0 749.5H886" stroke="#b7b7b7" stroke-width="1" fill="none"/>
<path d="M-4.5 363V738 M135.5 363V738 M275.5 363V738 M416.5 468V738 M556.5 363V738 M696.5 363V738 M836.5 363V738 M0 384.5H886 M0 524.5H206 M0 665.5H886" stroke="#666666" stroke-width="1" fill="none"/>
<path d="M416.1 363V469" stroke="#3f8f46" stroke-width="1.6"/>
<path d="M626 524.8H886" stroke="#8e2f3a" stroke-width="1.5"/>
<path d="M205.8 580.9 L205.8 496.8 L208.6 496 L211.4 495.3 L214.2 494.6 L217 493.8 L219.8 493.1 L222.6 492.5 L225.4 491.8 L228.2 491.1 L231 490.4 L233.8 489.8 L236.6 489.1 L239.4 488.5 L242.3 487.9 L245.1 487.3 L247.9 486.7 L250.7 486.1 L253.5 485.5 L256.3 484.9 L259.1 484.4 L261.9 483.8 L264.7 483.3 L267.5 482.7 L270.3 482.2 L273.1 481.7 L275.9 481.2 L278.7 480.7 L281.5 480.2 L284.3 479.7 L287.1 479.3 L289.9 478.8 L292.7 478.4 L295.5 477.9 L298.3 477.5 L301.1 477.1 L303.9 476.7 L306.7 476.3 L309.5 475.9 L312.4 475.5 L315.2 475.2 L318 474.8 L320.8 474.6 L323.6 474.6 L326.4 474.6 L329.2 474.6 L332 474.6 L334.8 474.6 L337.6 474.6 L340.4 474.6 L343.2 474.6 L346 474.6 L348.8 474.6 L351.6 474.6 L354.4 474.6 L357.2 474.6 L360 470.7 L362.8 470.5 L365.6 470.3 L368.4 470.2 L371.2 470 L374 470 L376.8 470 L379.6 470 L382.5 470 L385.3 470 L388.1 470 L390.9 470 L393.7 470 L396.5 470 L399.3 470 L402.1 470 L404.9 470 L407.7 470 L410.5 470 L413.3 470 L416.1 470 L418.9 470 L421.7 470 L424.5 470 L427.3 470 L430.1 470 L432.9 470 L435.7 470 L438.5 470 L441.3 470 L444.1 470 L446.9 470 L449.7 470 L452.6 470 L455.4 470 L458.2 470 L461 470 L463.8 470.2 L466.6 470.3 L469.4 470.5 L472.2 470.7 L475 474.6 L477.8 474.6 L480.6 474.6 L483.4 474.6 L486.2 474.6 L489 474.6 L491.8 474.6 L494.6 474.6 L497.4 474.6 L500.2 474.6 L503 474.6 L505.8 474.6 L508.6 474.6 L511.4 474.6 L514.2 474.8 L517 475.2 L519.8 475.5 L522.7 475.9 L525.5 476.3 L528.3 476.7 L531.1 477.1 L533.9 477.5 L536.7 477.9 L539.5 478.4 L542.3 478.8 L545.1 479.3 L547.9 479.7 L550.7 480.2 L553.5 480.7 L556.3 481.2 L559.1 481.7 L561.9 482.2 L564.7 482.7 L567.5 483.3 L570.3 483.8 L573.1 484.4 L575.9 484.9 L578.7 485.5 L581.5 486.1 L584.3 486.7 L587.1 487.3 L589.9 487.9 L592.8 488.5 L595.6 489.1 L598.4 489.8 L601.2 490.4 L604 491.1 L606.8 491.8 L609.6 492.5 L612.4 493.1 L615.2 493.8 L618 494.6 L620.8 495.3 L623.6 496 L626.4 496.8 L626.4 580.9Z" fill="#e8ad07"/>
<path d="M205.8 496.8 L208.6 496 L211.4 495.3 L214.2 494.6 L217 493.8 L219.8 493.1 L222.6 492.5 L225.4 491.8 L228.2 491.1 L231 490.4 L233.8 489.8 L236.6 489.1 L239.4 488.5 L242.3 487.9 L245.1 487.3 L247.9 486.7 L250.7 486.1 L253.5 485.5 L256.3 484.9 L259.1 484.4 L261.9 483.8 L264.7 483.3 L267.5 482.7 L270.3 482.2 L273.1 481.7 L275.9 481.2 L278.7 480.7 L281.5 480.2 L284.3 479.7 L287.1 479.3 L289.9 478.8 L292.7 478.4 L295.5 477.9 L298.3 477.5 L301.1 477.1 L303.9 476.7 L306.7 476.3 L309.5 475.9 L312.4 475.5 L315.2 475.2 L318 474.8 L320.8 474.6 L323.6 474.6 L326.4 474.6 L329.2 474.6 L332 474.6 L334.8 474.6 L337.6 474.6 L340.4 474.6 L343.2 474.6 L346 474.6 L348.8 474.6 L351.6 474.6 L354.4 474.6 L357.2 474.6 L360 470.7 L362.8 470.5 L365.6 470.3 L368.4 470.2 L371.2 470 L374 470 L376.8 470 L379.6 470 L382.5 470 L385.3 470 L388.1 470 L390.9 470 L393.7 470 L396.5 470 L399.3 470 L402.1 470 L404.9 470 L407.7 470 L410.5 470 L413.3 470 L416.1 470 L418.9 470 L421.7 470 L424.5 470 L427.3 470 L430.1 470 L432.9 470 L435.7 470 L438.5 470 L441.3 470 L444.1 470 L446.9 470 L449.7 470 L452.6 470 L455.4 470 L458.2 470 L461 470 L463.8 470.2 L466.6 470.3 L469.4 470.5 L472.2 470.7 L475 474.6 L477.8 474.6 L480.6 474.6 L483.4 474.6 L486.2 474.6 L489 474.6 L491.8 474.6 L494.6 474.6 L497.4 474.6 L500.2 474.6 L503 474.6 L505.8 474.6 L508.6 474.6 L511.4 474.6 L514.2 474.8 L517 475.2 L519.8 475.5 L522.7 475.9 L525.5 476.3 L528.3 476.7 L531.1 477.1 L533.9 477.5 L536.7 477.9 L539.5 478.4 L542.3 478.8 L545.1 479.3 L547.9 479.7 L550.7 480.2 L553.5 480.7 L556.3 481.2 L559.1 481.7 L561.9 482.2 L564.7 482.7 L567.5 483.3 L570.3 483.8 L573.1 484.4 L575.9 484.9 L578.7 485.5 L581.5 486.1 L584.3 486.7 L587.1 487.3 L589.9 487.9 L592.8 488.5 L595.6 489.1 L598.4 489.8 L601.2 490.4 L604 491.1 L606.8 491.8 L609.6 492.5 L612.4 493.1 L615.2 493.8 L618 494.6 L620.8 495.3 L623.6 496 L626.4 496.8 L626.4 524.8 L623.6 524.1 L620.8 523.3 L618 522.6 L615.2 521.9 L612.4 521.2 L609.6 520.5 L606.8 519.8 L604 519.1 L601.2 518.5 L598.4 517.8 L595.6 517.2 L592.8 516.5 L589.9 515.9 L587.1 515.3 L584.3 514.7 L581.5 514.1 L578.7 513.5 L575.9 513 L573.1 512.4 L570.3 511.8 L567.5 511.3 L564.7 510.8 L561.9 510.2 L559.1 509.7 L556.3 509.2 L553.5 508.7 L550.7 508.2 L547.9 507.8 L545.1 507.3 L542.3 506.9 L539.5 506.4 L536.7 506 L533.9 505.6 L531.1 505.1 L528.3 504.7 L525.5 504.3 L522.7 504 L519.8 503.6 L517 503.2 L514.2 502.9 L511.4 502.5 L508.6 502.2 L505.8 501.9 L503 501.6 L500.2 501.2 L497.4 501 L494.6 500.7 L491.8 500.4 L489 500.1 L486.2 499.9 L483.4 499.6 L480.6 499.4 L477.8 499.2 L475 499 L472.2 498.8 L469.4 498.6 L466.6 498.4 L463.8 498.2 L461 498 L458.2 497.9 L455.4 497.7 L452.6 497.6 L449.7 497.5 L446.9 497.4 L444.1 497.3 L441.3 497.2 L438.5 497.1 L435.7 497 L432.9 496.9 L430.1 496.9 L427.3 496.8 L424.5 496.8 L421.7 496.8 L418.9 496.8 L416.1 496.8 L413.3 496.8 L410.5 496.8 L407.7 496.8 L404.9 496.8 L402.1 496.9 L399.3 496.9 L396.5 497 L393.7 497.1 L390.9 497.2 L388.1 497.3 L385.3 497.4 L382.5 497.5 L379.6 497.6 L376.8 497.7 L374 497.9 L371.2 498 L368.4 498.2 L365.6 498.4 L362.8 498.6 L360 498.8 L357.2 499 L354.4 499.2 L351.6 499.4 L348.8 499.6 L346 499.9 L343.2 500.1 L340.4 500.4 L337.6 500.7 L334.8 501 L332 501.2 L329.2 501.6 L326.4 501.9 L323.6 502.2 L320.8 502.5 L318 502.9 L315.2 503.2 L312.4 503.6 L309.5 504 L306.7 504.3 L303.9 504.7 L301.1 505.1 L298.3 505.6 L295.5 506 L292.7 506.4 L289.9 506.9 L287.1 507.3 L284.3 507.8 L281.5 508.2 L278.7 508.7 L275.9 509.2 L273.1 509.7 L270.3 510.2 L267.5 510.8 L264.7 511.3 L261.9 511.8 L259.1 512.4 L256.3 513 L253.5 513.5 L250.7 514.1 L247.9 514.7 L245.1 515.3 L242.3 515.9 L239.4 516.5 L236.6 517.2 L233.8 517.8 L231 518.5 L228.2 519.1 L225.4 519.8 L222.6 520.5 L219.8 521.2 L217 521.9 L214.2 522.6 L211.4 523.3 L208.6 524.1 L205.8 524.8Z" fill="url(#fvband)"/>
<g clip-path="url(#c3band)">
<path d="M503.3 473.5 L503 473.5 L502 473.5 L500.3 473.5 L498 473.5 L495.1 473.5 L491.6 473.5 L487.5 473.5 L482.9 473.5 L477.8 473.5 L472.2 473.5 L466.1 473.5 L459.7 473.5 L453 473.5 L445.9 473.5 L438.7 473.5 L431.2 473.5 L423.7 473.5 L416.1 473.5 L408.5 473.5 L401 473.5 L393.5 473.5 L386.3 473.5 L379.2 473.5 L372.5 473.5 L366.1 473.5 L360 473.5 L354.4 473.5 L349.3 473.5 L344.7 473.5 L340.6 473.5 L337.1 473.5 L334.2 473.5 L331.9 473.5 L330.2 473.5 L329.2 473.5 L328.9 473.5 L329.2 473.5 L330.2 473.5 L331.9 473.5 L334.2 473.5 L337.1 473.5 L340.6 473.5 L344.7 473.5 L349.3 473.5 L354.4 473.5 L360 473.5 L366.1 473.5 L372.5 473.5 L379.2 473.5 L386.3 473.5 L393.5 473.5 L401 473.5 L408.5 473.5 L416.1 473.5 L423.7 473.5 L431.2 473.5 L438.7 473.5 L445.9 473.5 L453 473.5 L459.7 473.5 L466.1 473.5 L472.2 473.5 L477.8 473.5 L482.9 473.5 L487.5 473.5 L491.6 473.5 L495.1 473.5 L498 473.5 L500.3 473.5 L502 473.5 L503 473.5ZM474.4 470.9 L474.2 470.9 L473.5 470.9 L472.4 470.9 L470.9 470.9 L469 470.9 L466.6 470.9 L463.9 470.9 L460.8 470.9 L457.3 470.9 L453.6 470.9 L449.6 470.9 L445.3 470.9 L440.7 470.9 L436 470.9 L431.2 470.9 L426.2 470.9 L421.2 470.9 L416.1 470.9 L411 470.9 L406 470.9 L401 470.9 L396.2 470.9 L391.5 470.9 L386.9 470.9 L382.6 470.9 L378.6 470.9 L374.9 470.9 L371.4 470.9 L368.3 470.9 L365.6 470.9 L363.2 470.9 L361.3 470.9 L359.8 470.9 L358.7 470.9 L358 470.9 L357.8 470.9 L358 470.9 L358.7 470.9 L359.8 470.9 L361.3 470.9 L363.2 470.9 L365.6 470.9 L368.3 470.9 L371.4 470.9 L374.9 470.9 L378.6 470.9 L382.6 470.9 L386.9 470.9 L391.5 470.9 L396.2 470.9 L401 470.9 L406 470.9 L411 470.9 L416.1 470.9 L421.2 470.9 L426.2 470.9 L431.2 470.9 L436 470.9 L440.7 470.9 L445.3 470.9 L449.6 470.9 L453.6 470.9 L457.3 470.9 L460.8 470.9 L463.9 470.9 L466.6 470.9 L469 470.9 L470.9 470.9 L472.4 470.9 L473.5 470.9 L474.2 470.9Z" fill="#e0ae00" fill-rule="evenodd"/>
<path d="M416.1 473.1 L415.8 472.4 L414.8 471.7 L413.3 471.1 L411.1 470.6 L408.3 470.2 L404.9 469.9 L401 469.7 L396.6 469.5 L391.7 469.5 L386.4 469.5 L380.6 469.7 L374.5 469.9 L368 470.2 L361.3 470.6 L354.4 471.1 L347.3 471.7 L340.1 472.4 L332.8 473.1 L325.6 473.9 L318.4 474.8 L311.3 475.7 L304.3 476.7 L297.6 477.7 L291.2 478.7 L285.1 479.8 L279.3 480.8 L273.9 481.9 L269 483 L264.6 484.1 L260.7 485.1 L257.3 486.2 L254.6 487.2 L252.4 488.1 L250.8 489 L249.9 489.9 L249.5 490.7 L249.9 491.4 L250.8 492.1 L252.4 492.7 L254.6 493.2 L257.3 493.6 L260.7 493.9 L264.6 494.2 L269 494.3 L273.9 494.3 L279.3 494.3 L285.1 494.2 L291.2 493.9 L297.6 493.6 L304.3 493.2 L311.3 492.7 L318.4 492.1 L325.6 491.4 L332.8 490.7 L340.1 489.9 L347.3 489 L354.4 488.1 L361.3 487.2 L368 486.2 L374.5 485.1 L380.6 484.1 L386.4 483 L391.7 481.9 L396.6 480.8 L401 479.8 L404.9 478.7 L408.3 477.7 L411.1 476.7 L413.3 475.7 L414.8 474.8 L415.8 473.9ZM374.9 471.5 L374.7 471.2 L374.2 470.9 L373.4 470.6 L372.3 470.4 L370.9 470.2 L369.2 470.1 L367.3 470 L365 469.9 L362.6 469.9 L359.9 470 L356.9 470.1 L353.9 470.2 L350.6 470.4 L347.2 470.6 L343.7 470.9 L340.1 471.2 L336.5 471.5 L332.8 471.9 L329.2 472.3 L325.5 472.7 L321.9 473.2 L318.4 473.7 L315 474.2 L311.8 474.7 L308.7 475.2 L305.8 475.7 L303.1 476.2 L300.6 476.8 L298.4 477.3 L296.4 477.8 L294.7 478.3 L293.3 478.7 L292.2 479.2 L291.4 479.6 L290.9 480 L290.8 480.4 L290.9 480.7 L291.4 481 L292.2 481.3 L293.3 481.5 L294.7 481.7 L296.4 481.8 L298.4 481.9 L300.6 482 L303.1 482 L305.8 481.9 L308.7 481.8 L311.8 481.7 L315 481.5 L318.4 481.3 L321.9 481 L325.5 480.7 L329.2 480.4 L332.8 480 L336.5 479.6 L340.1 479.2 L343.7 478.7 L347.2 478.3 L350.6 477.8 L353.9 477.3 L356.9 476.7 L359.9 476.2 L362.6 475.7 L365 475.2 L367.3 474.7 L369.2 474.2 L370.9 473.7 L372.3 473.2 L373.4 472.7 L374.2 472.3 L374.7 471.9Z" fill="url(#fvpl)" fill-rule="evenodd"/><path d="M582.7 490.7 L582.3 489.9 L581.4 489 L579.8 488.1 L577.6 487.2 L574.9 486.2 L571.5 485.1 L567.6 484.1 L563.2 483 L558.3 481.9 L552.9 480.8 L547.1 479.8 L541 478.7 L534.6 477.7 L527.9 476.7 L520.9 475.7 L513.8 474.8 L506.6 473.9 L499.4 473.1 L492.1 472.4 L484.9 471.7 L477.8 471.1 L470.9 470.6 L464.2 470.2 L457.7 469.9 L451.6 469.7 L445.8 469.5 L440.5 469.5 L435.6 469.5 L431.2 469.7 L427.3 469.9 L423.9 470.2 L421.1 470.6 L418.9 471.1 L417.4 471.7 L416.4 472.4 L416.1 473.1 L416.4 473.9 L417.4 474.8 L418.9 475.7 L421.1 476.7 L423.9 477.7 L427.3 478.7 L431.2 479.8 L435.6 480.8 L440.5 481.9 L445.8 483 L451.6 484.1 L457.7 485.1 L464.2 486.2 L470.9 487.2 L477.8 488.1 L484.9 489 L492.1 489.9 L499.4 490.7 L506.6 491.4 L513.8 492.1 L520.9 492.7 L527.9 493.2 L534.6 493.6 L541 493.9 L547.1 494.2 L552.9 494.3 L558.3 494.3 L563.2 494.3 L567.6 494.2 L571.5 493.9 L574.9 493.6 L577.6 493.2 L579.8 492.7 L581.4 492.1 L582.3 491.4ZM541.4 480.4 L541.3 480 L540.8 479.6 L540 479.2 L538.9 478.7 L537.5 478.3 L535.8 477.8 L533.8 477.3 L531.6 476.8 L529.1 476.2 L526.4 475.7 L523.5 475.2 L520.4 474.7 L517.2 474.2 L513.8 473.7 L510.3 473.2 L506.7 472.7 L503 472.3 L499.4 471.9 L495.7 471.5 L492.1 471.2 L488.5 470.9 L485 470.6 L481.6 470.4 L478.3 470.2 L475.3 470.1 L472.3 470 L469.6 469.9 L467.2 469.9 L464.9 470 L463 470.1 L461.3 470.2 L459.9 470.4 L458.8 470.6 L458 470.9 L457.5 471.2 L457.3 471.5 L457.5 471.9 L458 472.3 L458.8 472.7 L459.9 473.2 L461.3 473.7 L463 474.2 L464.9 474.7 L467.2 475.2 L469.6 475.7 L472.3 476.2 L475.3 476.7 L478.3 477.3 L481.6 477.8 L485 478.3 L488.5 478.7 L492.1 479.2 L495.7 479.6 L499.4 480 L503 480.4 L506.7 480.7 L510.3 481 L513.8 481.3 L517.2 481.5 L520.4 481.7 L523.5 481.8 L526.4 481.9 L529.1 482 L531.6 482 L533.8 481.9 L535.8 481.8 L537.5 481.7 L538.9 481.5 L540 481.3 L540.8 481 L541.3 480.7Z" fill="url(#fvpr)" fill-rule="evenodd"/>
<path d="M474.4 470.9 L474.2 470.9 L473.5 470.9 L472.4 470.9 L470.9 470.9 L469 470.9 L466.6 470.9 L463.9 470.9 L460.8 470.9 L457.3 470.9 L453.6 470.9 L449.6 470.9 L445.3 470.9 L440.7 470.9 L436 470.9 L431.2 470.9 L426.2 470.9 L421.2 470.9 L416.1 470.9 L411 470.9 L406 470.9 L401 470.9 L396.2 470.9 L391.5 470.9 L386.9 470.9 L382.6 470.9 L378.6 470.9 L374.9 470.9 L371.4 470.9 L368.3 470.9 L365.6 470.9 L363.2 470.9 L361.3 470.9 L359.8 470.9 L358.7 470.9 L358 470.9 L357.8 470.9 L358 470.9 L358.7 470.9 L359.8 470.9 L361.3 470.9 L363.2 470.9 L365.6 470.9 L368.3 470.9 L371.4 470.9 L374.9 470.9 L378.6 470.9 L382.6 470.9 L386.9 470.9 L391.5 470.9 L396.2 470.9 L401 470.9 L406 470.9 L411 470.9 L416.1 470.9 L421.2 470.9 L426.2 470.9 L431.2 470.9 L436 470.9 L440.7 470.9 L445.3 470.9 L449.6 470.9 L453.6 470.9 L457.3 470.9 L460.8 470.9 L463.9 470.9 L466.6 470.9 L469 470.9 L470.9 470.9 L472.4 470.9 L473.5 470.9 L474.2 470.9Z" fill="#b88e00"/>
<path d="M391.5 471.8H438L416 480.2Z" fill="#e6b200"/>
</g>
<ellipse cx="404.5" cy="474.3" rx="5" ry="1.5" fill="#ffe45a"/>
<path d="M100 524.8H192M100 581H192M122.2 483V524M122.2 581V622M475 468.8H754M627 581H754M740.6 469V581" stroke="#333" stroke-width="1" fill="none"/>
<path d="M122.2 524.8l-6.3-27h12.6zM122.2 581l-6.3 27.4h12.6zM740.6 468.6l-5.9 27h11.8zM740.6 581l-5.9-27.6h11.8z" fill="#000"/>
<text transform="translate(115.4,588) rotate(-90)" font-size="38.5" fill="#0b0b0b">2.00</text>
<text transform="translate(733.2,562.5) rotate(-90)" font-size="38.5" fill="#0b0b0b">4.00</text>
<g transform="translate(825,389.7)" fill="#d9d3bd" stroke="#8b8674" stroke-width="0.6" stroke-linejoin="round"><ellipse cx="0" cy="3.6" rx="2.9" ry="3.6"/><path d="M-2.2 7.600L-6.500 9.500L-12 14L-20 23L-27.500 28L-26.500 30L-19 26.500L-11.500 19L-7.200 16L-6.200 26L-6.800 36L-6.400 50L-5.600 67L-2.400 67.400L-1.600 52L-0.400 38L0.400 38L1.600 52L2.400 67.400L5.600 67L6.400 50L6.800 36L6.200 26L7.200 16L11.500 19L19 26.500L26.500 30L27.500 28L20 23L12 14L6.500 9.500L2.200 7.600Z"/></g>
</g>
<g clip-path="url(#c4)">
<rect x="889" y="363" width="854" height="375" fill="#fafbfc"/>
<path d="M944.5 363V738 M1004.5 363V738 M1064.5 363V738 M1125.5 363V738 M1185.5 363V738 M1246.5 363V738 M1306.5 363V738 M1367.5 363V738 M1427.5 363V738 M1488.5 363V738 M1548.5 363V738 M1608.5 363V738 M1669.5 363V738 M1729.5 363V738 M1790.5 363V738 M889 368.5H1743 M889 429.5H1743 M889 489.5H1743 M889 610.5H1743 M889 671.5H1743 M889 732.5H1743 M890.5 363V738M889 368.5H1743M889 732.5H1743" stroke="#d0d3d7" stroke-width="1.4" fill="none"/>
<path d="M889 550.3H1300" stroke="#d2d5d9" stroke-width="1.3"/><path d="M1300 550.3H1743" stroke="#a84848" stroke-width="1.4"/>
<rect x="889" y="364" width="71" height="17.5" fill="#c9d0dc"/>
<text x="898.5" y="377.4" font-size="11.6" fill="#3a4450">Derecha</text>
<path d="M949.6 365.5V380.5" stroke="#38404c" stroke-width="1"/><path d="M951.6 371.2h6.6l-3.3 3.8z" fill="#2d3540"/>
</g>
<rect x="885.5" y="0" width="3.5" height="738" fill="url(#vdiv)"/>
<rect x="0" y="360" width="1743" height="3.5" fill="#e7ebf0"/><path d="M0 361.6H1743" stroke="#c3cad4" stroke-width="1"/>
<rect x="0" y="737" width="1743" height="24" fill="#e5e8ec"/>
<path d="M0 737.5H1743" stroke="#cfd4da" stroke-width="1"/>
<path d="M-57 739.5H2Q4 739.5 4 741.5V755.5Q4 757.5 2 757.5H-47Q-50 757.5 -51.5 755L-56 744Q-57 741 -57 739.5Z" fill="#eceff3" stroke="#b4bcc6" stroke-width="1"/>
<path d="M5 739.5H64Q66 739.5 66 741.5V755.5Q66 757.5 64 757.5H15Q12 757.5 10.5 755L6 744Q5 741 5 739.5Z" fill="#eceff3" stroke="#b4bcc6" stroke-width="1"/>
<path d="M67 739.5H119.5Q121.5 739.5 121.5 741.5V755.5Q121.5 757.5 119.5 757.5H77Q74 757.5 72.5 755L68 744Q67 741 67 739.5Z" fill="#eceff3" stroke="#b4bcc6" stroke-width="1"/>
<path d="M122.5 739.5H180.5Q182.5 739.5 182.5 741.5V755.5Q182.5 757.5 180.5 757.5H132.5Q129.5 757.5 128.0 755L123.5 744Q122.5 741 122.5 739.5Z" fill="#eceff3" stroke="#b4bcc6" stroke-width="1"/>
<path d="M183.5 739.5H211.5Q213.5 739.5 213.5 741.5V755.5Q213.5 757.5 211.5 757.5H193.5Q190.5 757.5 189.0 755L184.5 744Q183.5 741 183.5 739.5Z" fill="#eceff3" stroke="#b4bcc6" stroke-width="1"/>
<g font-size="11.8" fill="#1e242c"><text x="16" y="752.6">Superior</text><text x="78" y="752.6">Frontal</text><text x="134" y="752.6">Derecha</text></g>
<path d="M200.4 744.6h2.6v3.2h3.2v2.6h-3.2v3.2h-2.6v-3.2h-3.2v-2.6h3.2z" fill="#f4f6f8" stroke="#444c56" stroke-width="0.9"/>
<rect x="1105" y="331" width="412" height="431" fill="#dde3ea"/>
<rect x="1105" y="331" width="412" height="25.2" fill="url(#ptitle)"/>
<path d="M1105.5 762V331.5H1516.5V762" fill="none" stroke="#c4ccd6" stroke-width="1"/>
<path d="M1105 356.4H1517" stroke="#aab4c0" stroke-width="1"/>
<rect x="1106" y="357" width="410" height="21" fill="#e6e9ed"/>
<path d="M1113 378V357.4H1160.5L1180.5 378Z" fill="#fbfcfd"/><path d="M1160.5 357.4L1180.5 378" stroke="#c8ced6" stroke-width="1" fill="none"/>
<text x="1116.6" y="348" font-size="11.7" font-weight="bold" fill="#3b4a5c" textLength="61.5" lengthAdjust="spacingAndGlyphs">Rhinoceros</text>
<rect x="1117" y="359.2" width="16" height="15.4" rx="1" fill="#b8311f"/><path d="M1121 372c-2.6-3.6-2-8.4 2.4-10.6c3-1.4 6.2-0.6 8 1.4c-2.4-0.6-4.6-0.2-6 1.4c2 0 3.6 1 4.6 2.8c-1.8-0.8-3.6-0.8-4.8 0.2c1.600 0.800 2.400 2.200 2.400 4.200c-1.2-1.6-2.800-2.200-4.200-1.600c-1.200 0.600-1.600 1.400-2.400 2.200z" fill="#fff"/>
<text x="1135.4" y="371.6" font-size="12.2" fill="#151515" textLength="25.4" lengthAdjust="spacingAndGlyphs">Arion</text>
<rect x="1113" y="377.8" width="396" height="32.8" fill="#414141"/>
<path d="M1124.2 387l11.8 6.9l-11.8 6.9z" fill="#4b8a4e"/>
<rect x="1151.2" y="387.7" width="12.4" height="12.2" rx="1" fill="#d84c55"/>
<path d="M1180.600 389.300A7.100 7.100 0 1 1 1182 400.600" fill="none" stroke="#c9cbd2" stroke-width="1.7"/><path d="M1177.200 388.800l6.200-2.600l-0.400 6.400z" fill="#c9cbd2"/>
<g><rect x="1214.5" y="385.4" width="2" height="16.4" fill="#c8c8cc"/><rect x="1217.5" y="387" width="2.600" height="9" fill="#d8402c"/><rect x="1220.100" y="386" width="2.600" height="10" fill="#e8c020"/><rect x="1222.700" y="385.4" width="2.600" height="10.600" fill="#3ca848"/><rect x="1225.300" y="386.400" width="2.600" height="9.600" fill="#3868c8"/><rect x="1227.900" y="387.400" width="1.800" height="12" fill="#b0b0b8"/><path d="M1217 397.500h2v3.500h-2zM1220 398.500h2v2.500h-2zM1223 397h2v4h-2zM1226 398.500h1.600v2.500h-1.600z" fill="#dcdce0"/><path d="M1229 397.500l2.600 4.500h-3.200z" fill="#f4f4f4"/></g>
<g><rect x="1249.600" y="390.400" width="14.800" height="9.600" rx="1.600" fill="#b9bcc6"/><rect x="1252" y="389" width="4" height="2" fill="#b9bcc6"/><circle cx="1258" cy="395.200" r="3.300" fill="#3a3c44"/><circle cx="1258.800" cy="394.400" r="1.100" fill="#d8dae0"/><rect x="1251" y="392" width="2.400" height="1.600" fill="#e8e8ee"/></g>
<g><path d="M1276 401.500v-11.500h5l1.500 1.500h8v10z" fill="#9fa6b8"/><path d="M1277.500 401.500l3.200-7.500h14l-4 7.500z" fill="#c9cfdf"/><path d="M1286.500 388.600l5.600-3.800l2.600 2.400l-5.200 4.200z" fill="#d8b070"/><path d="M1292.100 384.800l2.600 2.400l0.800-1.600z" fill="#a07030"/></g>
<circle cx="1493" cy="393.700" r="8.600" fill="#2b2b2d" stroke="#9a9a9e" stroke-width="1.200"/><path d="M1489.500 391.200l8.500 3l-1.200 2.600z" fill="#c4332a"/>
<circle cx="1492.3" cy="347" r="1.500" fill="#d0dcec" stroke="#5a6470" stroke-width="0.8"/><circle cx="1490.7" cy="350.7" r="1.500" fill="#d0dcec" stroke="#5a6470" stroke-width="0.8"/><circle cx="1487" cy="352.3" r="1.500" fill="#d0dcec" stroke="#5a6470" stroke-width="0.8"/><circle cx="1483.3" cy="350.7" r="1.500" fill="#d0dcec" stroke="#5a6470" stroke-width="0.8"/><circle cx="1481.7" cy="347" r="1.500" fill="#d0dcec" stroke="#5a6470" stroke-width="0.8"/><circle cx="1483.3" cy="343.3" r="1.500" fill="#d0dcec" stroke="#5a6470" stroke-width="0.8"/><circle cx="1487" cy="341.7" r="1.500" fill="#d0dcec" stroke="#5a6470" stroke-width="0.8"/><circle cx="1490.7" cy="343.3" r="1.500" fill="#d0dcec" stroke="#5a6470" stroke-width="0.8"/><circle cx="1487" cy="347" r="4.700" fill="#d2deee" stroke="#5a6470" stroke-width="0.9"/><circle cx="1487" cy="347" r="4.100" fill="#d2deee"/><circle cx="1487" cy="347" r="1.700" fill="#eef3f9" stroke="#5a6470" stroke-width="0.8"/>
<path d="M1501 343.500l7 7M1508 343.500l-7 7" stroke="#c6c9ce" stroke-width="1.900" fill="none"/>
<rect x="1113" y="410.400" width="396" height="319" fill="#0d0d0d"/><rect x="1114" y="411" width="394" height="318.400" fill="#ffffff"/>
<rect x="1113" y="729.200" width="396" height="22.500" fill="#454545"/>
<rect x="1152.500" y="734.400" width="169" height="15.600" fill="#484848" stroke="#2c2c2c" stroke-width="1"/><rect x="1324.600" y="734.400" width="181.800" height="15.600" fill="#484848" stroke="#2c2c2c" stroke-width="1"/>
<text x="1117.400" y="746.600" font-size="11.400" fill="#d6d6d6" textLength="31.800" lengthAdjust="spacingAndGlyphs">Status:</text><text x="1156.200" y="746.600" font-size="11.400" fill="#d6d6d6" textLength="42.600" lengthAdjust="spacingAndGlyphs">Engaged</text>
<g clip-path="url(#c5)">
<path d="M1178.2 610.7 L1192.2 629.7 L1333.6 691.9 L1412.2 557.8 L1402.2 551.8 L1331.6 675.9Z" fill="#9a9a98" opacity="0.2" filter="url(#blur6)"/>
<path d="M1331.6 664.8 L1335.1 657.9 L1338.5 651.1 L1341.9 644.4 L1345.3 637.9 L1348.6 631.5 L1351.9 625.3 L1355.2 619.2 L1358.4 613.3 L1361.6 607.5 L1364.7 601.9 L1367.8 596.5 L1370.9 591.2 L1373.9 586 L1376.9 581 L1379.8 576.1 L1382.7 571.4 L1385.5 566.9 L1388.3 562.5 L1391 558.2 L1393.7 554.1 L1396.3 550.2 L1398.9 546.4 L1401.4 542.7 L1403.9 539.2 L1402.2 551.8 L1331.6 675.9Z" fill="url(#rrsg)"/>
<path d="M1178.4 595.6 L1184 597.3 L1189.8 599.1 L1195.6 601 L1201.5 603 L1207.4 605.1 L1213.5 607.4 L1219.6 609.7 L1225.8 612.1 L1232 614.6 L1238.3 617.3 L1244.7 620 L1251.1 622.9 L1257.6 625.8 L1264.1 628.9 L1270.7 632 L1277.4 635.3 L1284 638.6 L1290.7 642.1 L1297.5 645.7 L1304.3 649.3 L1311.1 653 L1317.9 656.9 L1324.7 660.8 L1331.6 664.8 L1331.6 675.9 L1182.2 607.7Z" fill="url(#rflg)"/>
<path d="M1178.4 595.6 L1182.3 589.4 L1186.1 583.4 L1189.9 577.5 L1193.8 571.7 L1197.6 566.1 L1201.4 560.6 L1205.2 555.3 L1209 550.1 L1212.7 545.1 L1216.4 540.2 L1220.2 535.4 L1223.9 530.8 L1227.5 526.4 L1231.2 522 L1234.8 517.9 L1238.4 513.8 L1241.9 509.9 L1245.4 506.2 L1248.9 502.6 L1252.4 499.1 L1255.8 495.8 L1259.2 492.6 L1262.6 489.5 L1265.9 486.6 L1271.2 487.6 L1276.6 488.7 L1282 489.9 L1287.4 491.2 L1292.9 492.6 L1298.5 494.2 L1304.1 495.8 L1309.7 497.5 L1315.4 499.3 L1321.2 501.3 L1326.9 503.3 L1332.7 505.5 L1338.5 507.7 L1344.4 510.1 L1350.3 512.5 L1356.2 515.1 L1362.1 517.7 L1368 520.5 L1374 523.4 L1380 526.3 L1385.9 529.4 L1391.9 532.6 L1397.9 535.8 L1403.9 539.2 L1401.4 542.7 L1398.9 546.4 L1396.3 550.2 L1393.7 554.1 L1391 558.2 L1388.3 562.5 L1385.5 566.9 L1382.7 571.4 L1379.8 576.1 L1376.9 581 L1373.9 586 L1370.9 591.2 L1367.8 596.5 L1364.7 601.9 L1361.6 607.5 L1358.4 613.3 L1355.2 619.2 L1351.9 625.3 L1348.6 631.5 L1345.3 637.9 L1341.9 644.4 L1338.5 651.1 L1335.1 657.9 L1331.6 664.8 L1324.7 660.8 L1317.9 656.9 L1311.1 653 L1304.3 649.3 L1297.5 645.7 L1290.7 642.1 L1284 638.6 L1277.4 635.3 L1270.7 632 L1264.1 628.9 L1257.6 625.8 L1251.1 622.9 L1244.7 620 L1238.3 617.3 L1232 614.6 L1225.8 612.1 L1219.6 609.7 L1213.5 607.4 L1207.4 605.1 L1201.5 603 L1195.6 601 L1189.8 599.1 L1184 597.3Z" fill="url(#rtopg)"/>
<g clip-path="url(#c5top)"><rect x="1170" y="480" width="110" height="200" fill="url(#rleft)"/></g>
<g mask="url(#m5out)"><path d="M1266.3 573.6 L1267.1 572.2 L1267.8 570.7 L1268.4 569.2 L1268.8 567.7 L1269 566.2 L1269.1 564.7 L1269 563.3 L1268.8 561.8 L1268.4 560.4 L1267.9 559.1 L1267.2 557.8 L1266.4 556.7 L1265.4 555.5 L1264.4 554.5 L1263.2 553.6 L1261.8 552.8 L1260.4 552.1 L1258.9 551.5 L1257.4 551 L1255.7 550.7 L1254.1 550.5 L1252.3 550.4 L1250.6 550.4 L1248.8 550.6 L1247 550.8 L1245.3 551.2 L1243.5 551.8 L1241.8 552.4 L1240.1 553.2 L1238.5 554 L1237 555 L1235.6 556 L1234.2 557.2 L1233 558.4 L1231.8 559.7 L1230.8 561 L1229.9 562.4 L1229.2 563.8 L1228.6 565.3 L1228.1 566.8 L1227.8 568.3 L1227.7 569.8 L1227.7 571.2 L1227.8 572.7 L1228.1 574.1 L1228.6 575.5 L1229.2 576.8 L1230 578 L1230.9 579.2 L1232 580.2 L1233.2 581.2 L1234.5 582.1 L1235.9 582.8 L1237.4 583.5 L1239 584 L1240.7 584.4 L1242.4 584.6 L1244.2 584.7 L1246 584.7 L1247.9 584.6 L1249.7 584.3 L1251.6 583.9 L1253.4 583.3 L1255.1 582.6 L1256.9 581.9 L1258.5 580.9 L1260.1 579.9 L1261.5 578.8 L1262.9 577.6 L1264.2 576.4 L1265.3 575Z" fill="url(#risl)"/><path d="M1327.4 601.9 L1328.2 600.4 L1328.8 598.8 L1329.3 597.2 L1329.6 595.5 L1329.7 593.9 L1329.7 592.2 L1329.5 590.5 L1329.2 588.9 L1328.7 587.3 L1328.1 585.7 L1327.3 584.2 L1326.3 582.7 L1325.2 581.4 L1324 580.1 L1322.7 578.9 L1321.3 577.8 L1319.8 576.8 L1318.2 576 L1316.5 575.3 L1314.8 574.7 L1313 574.2 L1311.2 573.9 L1309.3 573.7 L1307.5 573.7 L1305.6 573.8 L1303.8 574 L1302 574.4 L1300.3 574.9 L1298.6 575.6 L1297 576.4 L1295.4 577.3 L1294 578.3 L1292.6 579.4 L1291.4 580.6 L1290.3 582 L1289.3 583.4 L1288.5 584.9 L1287.8 586.4 L1287.3 588 L1286.9 589.6 L1286.7 591.3 L1286.6 593 L1286.7 594.7 L1287 596.3 L1287.5 598 L1288.1 599.6 L1288.8 601.1 L1289.8 602.6 L1290.8 604.1 L1292 605.4 L1293.3 606.6 L1294.8 607.8 L1296.3 608.8 L1298 609.7 L1299.7 610.4 L1301.5 611.1 L1303.3 611.6 L1305.2 611.9 L1307.1 612.1 L1309 612.1 L1310.9 612 L1312.8 611.7 L1314.6 611.3 L1316.4 610.8 L1318.2 610.1 L1319.8 609.2 L1321.4 608.3 L1322.8 607.2 L1324.2 606 L1325.4 604.7 L1326.5 603.4Z" fill="#fffef6"/></g>
<path d="M1315.2 562.4 L1316.1 560.9 L1316.8 559.4 L1317.4 557.8 L1317.7 556.2 L1317.9 554.6 L1317.9 553 L1317.7 551.4 L1317.4 549.9 L1316.9 548.4 L1316.2 546.9 L1315.3 545.5 L1314.3 544.1 L1313.2 542.9 L1311.9 541.7 L1310.5 540.6 L1308.9 539.6 L1307.3 538.7 L1305.6 537.9 L1303.8 537.3 L1301.9 536.8 L1300 536.4 L1298 536.1 L1296 536 L1294 536 L1292 536.1 L1290 536.4 L1288 536.8 L1286.1 537.3 L1284.3 538 L1282.5 538.8 L1280.8 539.7 L1279.2 540.7 L1277.7 541.7 L1276.3 542.9 L1275.1 544.2 L1274 545.6 L1273.1 547 L1272.3 548.5 L1271.7 550 L1271.2 551.6 L1270.9 553.2 L1270.8 554.8 L1270.9 556.4 L1271.2 557.9 L1271.6 559.5 L1272.2 561 L1273 562.5 L1274 563.9 L1275.1 565.2 L1276.4 566.5 L1277.8 567.7 L1279.3 568.7 L1281 569.7 L1282.8 570.5 L1284.6 571.2 L1286.6 571.8 L1288.6 572.2 L1290.7 572.5 L1292.8 572.6 L1294.9 572.6 L1296.9 572.4 L1299 572.1 L1301.1 571.7 L1303 571.1 L1305 570.4 L1306.8 569.6 L1308.5 568.6 L1310.1 567.6 L1311.6 566.4 L1313 565.1 L1314.2 563.8Z" fill="#fffffa"/>
<g filter="url(#gv5)"><rect x="1170" y="480" width="240" height="200" fill="url(#rgr)" mask="url(#m5u)"/></g>
<g fill="none" stroke="#3f300a" stroke-width="0.9" opacity="0.85"><path d="M1277.7 578.3 L1279.1 576 L1280.2 573.6 L1281.1 571.1 L1281.7 568.7 L1282.1 566.2 L1282.2 563.8 L1282 561.4 L1281.6 559.1 L1280.9 556.9 L1280 554.7 L1278.9 552.7 L1277.6 550.8 L1276 549 L1274.2 547.4 L1272.3 545.9 L1270.1 544.6 L1267.9 543.5 L1265.5 542.6 L1262.9 541.9 L1260.3 541.3 L1257.6 541 L1254.8 540.8 L1252 540.9 L1249.2 541.1 L1246.3 541.6 L1243.5 542.2 L1240.7 543.1 L1238 544.1 L1235.3 545.3 L1232.7 546.6 L1230.3 548.2 L1227.9 549.8 L1225.8 551.7 L1223.7 553.6 L1221.9 555.7 L1220.2 557.8 L1218.8 560 L1217.5 562.4 L1216.5 564.7 L1215.8 567.1 L1215.2 569.5 L1215 571.9 L1214.9 574.3 L1215.2 576.7 L1215.6 579 L1216.4 581.2 L1217.4 583.4 L1218.6 585.4 L1220.1 587.3 L1221.8 589.1 L1223.7 590.7 L1225.8 592.1 L1228.1 593.4 L1230.6 594.5 L1233.2 595.3 L1235.9 596 L1238.8 596.4 L1241.7 596.6 L1244.7 596.6 L1247.7 596.3 L1250.7 595.9 L1253.7 595.2 L1256.7 594.3 L1259.6 593.2 L1262.4 591.8 L1265.1 590.4 L1267.6 588.7 L1270 586.9 L1272.3 584.9 L1274.3 582.8 L1276.1 580.6ZM1266.3 573.6 L1267.1 572.2 L1267.8 570.7 L1268.4 569.2 L1268.8 567.7 L1269 566.2 L1269.1 564.7 L1269 563.3 L1268.8 561.8 L1268.4 560.4 L1267.9 559.1 L1267.2 557.8 L1266.4 556.7 L1265.4 555.5 L1264.4 554.5 L1263.2 553.6 L1261.8 552.8 L1260.4 552.1 L1258.9 551.5 L1257.4 551 L1255.7 550.7 L1254.1 550.5 L1252.3 550.4 L1250.6 550.4 L1248.8 550.6 L1247 550.8 L1245.3 551.2 L1243.5 551.8 L1241.8 552.4 L1240.1 553.2 L1238.5 554 L1237 555 L1235.6 556 L1234.2 557.2 L1233 558.4 L1231.8 559.7 L1230.8 561 L1229.9 562.4 L1229.2 563.8 L1228.6 565.3 L1228.1 566.8 L1227.8 568.3 L1227.7 569.8 L1227.7 571.2 L1227.8 572.7 L1228.1 574.1 L1228.6 575.5 L1229.2 576.8 L1230 578 L1230.9 579.2 L1232 580.2 L1233.2 581.2 L1234.5 582.1 L1235.9 582.8 L1237.4 583.5 L1239 584 L1240.7 584.4 L1242.4 584.6 L1244.2 584.7 L1246 584.7 L1247.9 584.6 L1249.7 584.3 L1251.6 583.9 L1253.4 583.3 L1255.1 582.6 L1256.9 581.9 L1258.5 580.9 L1260.1 579.9 L1261.5 578.8 L1262.9 577.6 L1264.2 576.4 L1265.3 575Z" mask="url(#m5out)"/><path d="M1310.3 531.9 L1311.5 530.1 L1312.5 528.3 L1313.2 526.5 L1313.8 524.6 L1314 522.7 L1314.1 520.9 L1313.8 519.1 L1313.4 517.3 L1312.7 515.6 L1311.8 513.9 L1310.7 512.3 L1309.3 510.8 L1307.8 509.4 L1306.1 508.1 L1304.2 506.9 L1302.1 505.9 L1299.9 504.9 L1297.6 504.1 L1295.2 503.5 L1292.7 503 L1290.1 502.6 L1287.5 502.4 L1284.8 502.3 L1282.1 502.4 L1279.4 502.6 L1276.7 503 L1274.1 503.5 L1271.5 504.2 L1269 505 L1266.5 505.9 L1264.2 507 L1262 508.2 L1260 509.5 L1258.1 510.9 L1256.3 512.4 L1254.8 514 L1253.4 515.6 L1252.3 517.4 L1251.4 519.1 L1250.7 521 L1250.2 522.8 L1250 524.6 L1250 526.5 L1250.3 528.3 L1250.8 530.1 L1251.5 531.9 L1252.5 533.6 L1253.7 535.2 L1255.2 536.7 L1256.9 538.1 L1258.8 539.4 L1260.8 540.6 L1263.1 541.7 L1265.5 542.6 L1268 543.4 L1270.7 544 L1273.4 544.4 L1276.2 544.6 L1279.1 544.7 L1282 544.6 L1284.9 544.4 L1287.8 544 L1290.6 543.4 L1293.3 542.6 L1296 541.7 L1298.5 540.7 L1300.9 539.5 L1303.2 538.1 L1305.2 536.7 L1307.1 535.2 L1308.8 533.6ZM1299.3 527.7 L1300 526.6 L1300.7 525.5 L1301.2 524.4 L1301.5 523.2 L1301.7 522.1 L1301.7 521 L1301.6 519.8 L1301.4 518.7 L1301 517.7 L1300.4 516.6 L1299.7 515.6 L1298.9 514.7 L1298 513.8 L1296.9 513 L1295.8 512.3 L1294.5 511.6 L1293.1 511 L1291.7 510.5 L1290.2 510.1 L1288.6 509.8 L1287 509.5 L1285.4 509.4 L1283.7 509.3 L1282 509.4 L1280.3 509.5 L1278.7 509.8 L1277 510.1 L1275.4 510.5 L1273.8 511 L1272.3 511.6 L1270.9 512.3 L1269.5 513 L1268.2 513.9 L1267.1 514.7 L1266 515.7 L1265.1 516.7 L1264.2 517.7 L1263.5 518.8 L1263 519.9 L1262.6 521 L1262.3 522.1 L1262.2 523.3 L1262.2 524.4 L1262.4 525.5 L1262.8 526.6 L1263.2 527.7 L1263.9 528.7 L1264.7 529.7 L1265.6 530.6 L1266.6 531.5 L1267.8 532.3 L1269 533 L1270.4 533.6 L1271.9 534.2 L1273.4 534.6 L1275.1 535 L1276.7 535.3 L1278.4 535.4 L1280.2 535.5 L1282 535.4 L1283.7 535.3 L1285.5 535 L1287.2 534.6 L1288.9 534.2 L1290.5 533.6 L1292 533 L1293.5 532.3 L1294.9 531.5 L1296.2 530.6 L1297.3 529.7 L1298.4 528.7Z" mask="url(#m5out)"/><path d="M1339.4 608.4 L1340.7 605.9 L1341.7 603.3 L1342.4 600.7 L1342.9 598 L1343.1 595.3 L1343 592.6 L1342.7 589.9 L1342.1 587.2 L1341.3 584.6 L1340.2 582.1 L1338.9 579.7 L1337.4 577.3 L1335.6 575.1 L1333.7 573.1 L1331.6 571.2 L1329.3 569.5 L1326.8 567.9 L1324.2 566.6 L1321.6 565.4 L1318.8 564.5 L1315.9 563.7 L1313 563.2 L1310 562.9 L1307.1 562.9 L1304.1 563 L1301.2 563.4 L1298.3 564 L1295.5 564.8 L1292.7 565.9 L1290.1 567.1 L1287.6 568.5 L1285.3 570.2 L1283.1 572 L1281.1 573.9 L1279.3 576.1 L1277.7 578.3 L1276.3 580.7 L1275.2 583.2 L1274.3 585.8 L1273.7 588.4 L1273.3 591.1 L1273.2 593.8 L1273.4 596.6 L1273.8 599.3 L1274.5 602 L1275.4 604.6 L1276.6 607.2 L1278.1 609.6 L1279.8 612 L1281.8 614.2 L1283.9 616.2 L1286.2 618.1 L1288.8 619.7 L1291.4 621.2 L1294.2 622.5 L1297.2 623.5 L1300.2 624.3 L1303.3 624.9 L1306.4 625.2 L1309.5 625.2 L1312.6 625 L1315.7 624.6 L1318.8 623.9 L1321.7 623 L1324.5 621.8 L1327.2 620.5 L1329.7 618.9 L1332.1 617.1 L1334.3 615.1 L1336.2 613 L1337.9 610.8ZM1327.4 601.9 L1328.2 600.4 L1328.8 598.8 L1329.3 597.2 L1329.6 595.5 L1329.7 593.9 L1329.7 592.2 L1329.5 590.5 L1329.2 588.9 L1328.7 587.3 L1328.1 585.7 L1327.3 584.2 L1326.3 582.7 L1325.2 581.4 L1324 580.1 L1322.7 578.9 L1321.3 577.8 L1319.8 576.8 L1318.2 576 L1316.5 575.3 L1314.8 574.7 L1313 574.2 L1311.2 573.9 L1309.3 573.7 L1307.5 573.7 L1305.6 573.8 L1303.8 574 L1302 574.4 L1300.3 574.9 L1298.6 575.6 L1297 576.4 L1295.4 577.3 L1294 578.3 L1292.6 579.4 L1291.4 580.6 L1290.3 582 L1289.3 583.4 L1288.5 584.9 L1287.8 586.4 L1287.3 588 L1286.9 589.6 L1286.7 591.3 L1286.6 593 L1286.7 594.7 L1287 596.3 L1287.5 598 L1288.1 599.6 L1288.8 601.1 L1289.8 602.6 L1290.8 604.1 L1292 605.4 L1293.3 606.6 L1294.8 607.8 L1296.3 608.8 L1298 609.7 L1299.7 610.4 L1301.5 611.1 L1303.3 611.6 L1305.2 611.9 L1307.1 612.1 L1309 612.1 L1310.9 612 L1312.8 611.7 L1314.6 611.3 L1316.4 610.8 L1318.2 610.1 L1319.8 609.2 L1321.4 608.3 L1322.8 607.2 L1324.2 606 L1325.4 604.7 L1326.5 603.4Z" mask="url(#m5out)"/><path d="M1369.1 559.3 L1370.2 557.4 L1371 555.4 L1371.6 553.4 L1372 551.3 L1372.1 549.2 L1371.9 547.1 L1371.6 544.9 L1370.9 542.8 L1370.1 540.7 L1369 538.7 L1367.7 536.7 L1366.2 534.8 L1364.5 533 L1362.6 531.3 L1360.6 529.7 L1358.4 528.2 L1356 526.8 L1353.6 525.6 L1351 524.5 L1348.4 523.6 L1345.7 522.9 L1343 522.3 L1340.2 521.9 L1337.4 521.6 L1334.7 521.6 L1331.9 521.7 L1329.3 522 L1326.6 522.4 L1324.1 523.1 L1321.7 523.9 L1319.4 524.8 L1317.2 525.9 L1315.2 527.2 L1313.4 528.6 L1311.7 530.2 L1310.3 531.9 L1309 533.6 L1308 535.5 L1307.2 537.5 L1306.7 539.5 L1306.4 541.6 L1306.3 543.8 L1306.5 545.9 L1307 548.1 L1307.7 550.3 L1308.7 552.4 L1309.9 554.5 L1311.3 556.6 L1313 558.5 L1314.9 560.4 L1317 562.1 L1319.2 563.8 L1321.7 565.2 L1324.2 566.6 L1326.9 567.7 L1329.7 568.7 L1332.6 569.6 L1335.5 570.2 L1338.5 570.6 L1341.5 570.8 L1344.4 570.9 L1347.3 570.7 L1350.1 570.3 L1352.9 569.8 L1355.5 569 L1358 568.1 L1360.3 567 L1362.5 565.7 L1364.5 564.3 L1366.2 562.8 L1367.8 561.1ZM1357.7 553.3 L1358.3 552.2 L1358.9 550.9 L1359.3 549.7 L1359.5 548.4 L1359.6 547.1 L1359.5 545.8 L1359.3 544.5 L1359 543.2 L1358.4 541.9 L1357.8 540.6 L1357 539.4 L1356.1 538.2 L1355 537.1 L1353.9 536 L1352.6 535 L1351.2 534 L1349.8 533.2 L1348.3 532.4 L1346.7 531.8 L1345 531.2 L1343.4 530.7 L1341.6 530.3 L1339.9 530.1 L1338.2 529.9 L1336.5 529.9 L1334.7 530 L1333.1 530.2 L1331.4 530.5 L1329.9 530.9 L1328.4 531.4 L1326.9 532 L1325.6 532.7 L1324.4 533.5 L1323.2 534.4 L1322.2 535.3 L1321.4 536.4 L1320.6 537.5 L1320 538.7 L1319.5 539.9 L1319.2 541.2 L1319.1 542.4 L1319.1 543.8 L1319.2 545.1 L1319.5 546.4 L1320 547.8 L1320.6 549.1 L1321.4 550.3 L1322.3 551.6 L1323.3 552.8 L1324.4 553.9 L1325.7 555 L1327.1 555.9 L1328.6 556.8 L1330.2 557.7 L1331.8 558.4 L1333.5 559 L1335.3 559.5 L1337.1 559.8 L1338.9 560.1 L1340.7 560.3 L1342.5 560.3 L1344.2 560.2 L1346 560 L1347.6 559.6 L1349.2 559.2 L1350.8 558.6 L1352.2 558 L1353.5 557.2 L1354.8 556.4 L1355.9 555.4 L1356.8 554.4Z" mask="url(#m5out)"/><path d="M1325.7 567.3 L1327 565 L1328 562.7 L1328.8 560.4 L1329.3 558 L1329.5 555.6 L1329.5 553.2 L1329.2 550.9 L1328.7 548.6 L1327.9 546.3 L1326.8 544.1 L1325.5 542 L1324 540 L1322.3 538.1 L1320.4 536.4 L1318.3 534.8 L1316 533.3 L1313.5 532 L1311 530.9 L1308.3 530 L1305.5 529.2 L1302.7 528.6 L1299.8 528.3 L1296.8 528.1 L1293.8 528.1 L1290.9 528.3 L1287.9 528.7 L1285 529.3 L1282.2 530 L1279.5 531 L1276.8 532.1 L1274.3 533.4 L1271.9 534.9 L1269.7 536.5 L1267.6 538.3 L1265.8 540.1 L1264.1 542.2 L1262.7 544.3 L1261.5 546.5 L1260.5 548.7 L1259.8 551.1 L1259.4 553.4 L1259.2 555.8 L1259.3 558.2 L1259.7 560.6 L1260.3 562.9 L1261.2 565.2 L1262.3 567.5 L1263.8 569.6 L1265.4 571.6 L1267.3 573.5 L1269.4 575.3 L1271.7 576.9 L1274.2 578.3 L1276.9 579.6 L1279.7 580.7 L1282.7 581.5 L1285.7 582.2 L1288.8 582.6 L1292 582.8 L1295.1 582.8 L1298.3 582.6 L1301.4 582.1 L1304.5 581.4 L1307.5 580.6 L1310.4 579.5 L1313.1 578.2 L1315.7 576.7 L1318.1 575.1 L1320.3 573.3 L1322.3 571.4 L1324.1 569.4ZM1315.2 562.4 L1316.1 560.9 L1316.8 559.4 L1317.4 557.8 L1317.7 556.2 L1317.9 554.6 L1317.9 553 L1317.7 551.4 L1317.4 549.9 L1316.9 548.4 L1316.2 546.9 L1315.3 545.5 L1314.3 544.1 L1313.2 542.9 L1311.9 541.7 L1310.5 540.6 L1308.9 539.6 L1307.3 538.7 L1305.6 537.9 L1303.8 537.3 L1301.9 536.8 L1300 536.4 L1298 536.1 L1296 536 L1294 536 L1292 536.1 L1290 536.4 L1288 536.8 L1286.1 537.3 L1284.3 538 L1282.5 538.8 L1280.8 539.7 L1279.2 540.7 L1277.7 541.7 L1276.3 542.9 L1275.1 544.2 L1274 545.6 L1273.1 547 L1272.3 548.5 L1271.7 550 L1271.2 551.6 L1270.9 553.2 L1270.8 554.8 L1270.9 556.4 L1271.2 557.9 L1271.6 559.5 L1272.2 561 L1273 562.5 L1274 563.9 L1275.1 565.2 L1276.4 566.5 L1277.8 567.7 L1279.3 568.7 L1281 569.7 L1282.8 570.5 L1284.6 571.2 L1286.6 571.8 L1288.6 572.2 L1290.7 572.5 L1292.8 572.6 L1294.9 572.6 L1296.9 572.4 L1299 572.1 L1301.1 571.7 L1303 571.1 L1305 570.4 L1306.8 569.6 L1308.5 568.6 L1310.1 567.6 L1311.6 566.4 L1313 565.1 L1314.2 563.8Z"/></g>
</g>
</svg></body></html>
